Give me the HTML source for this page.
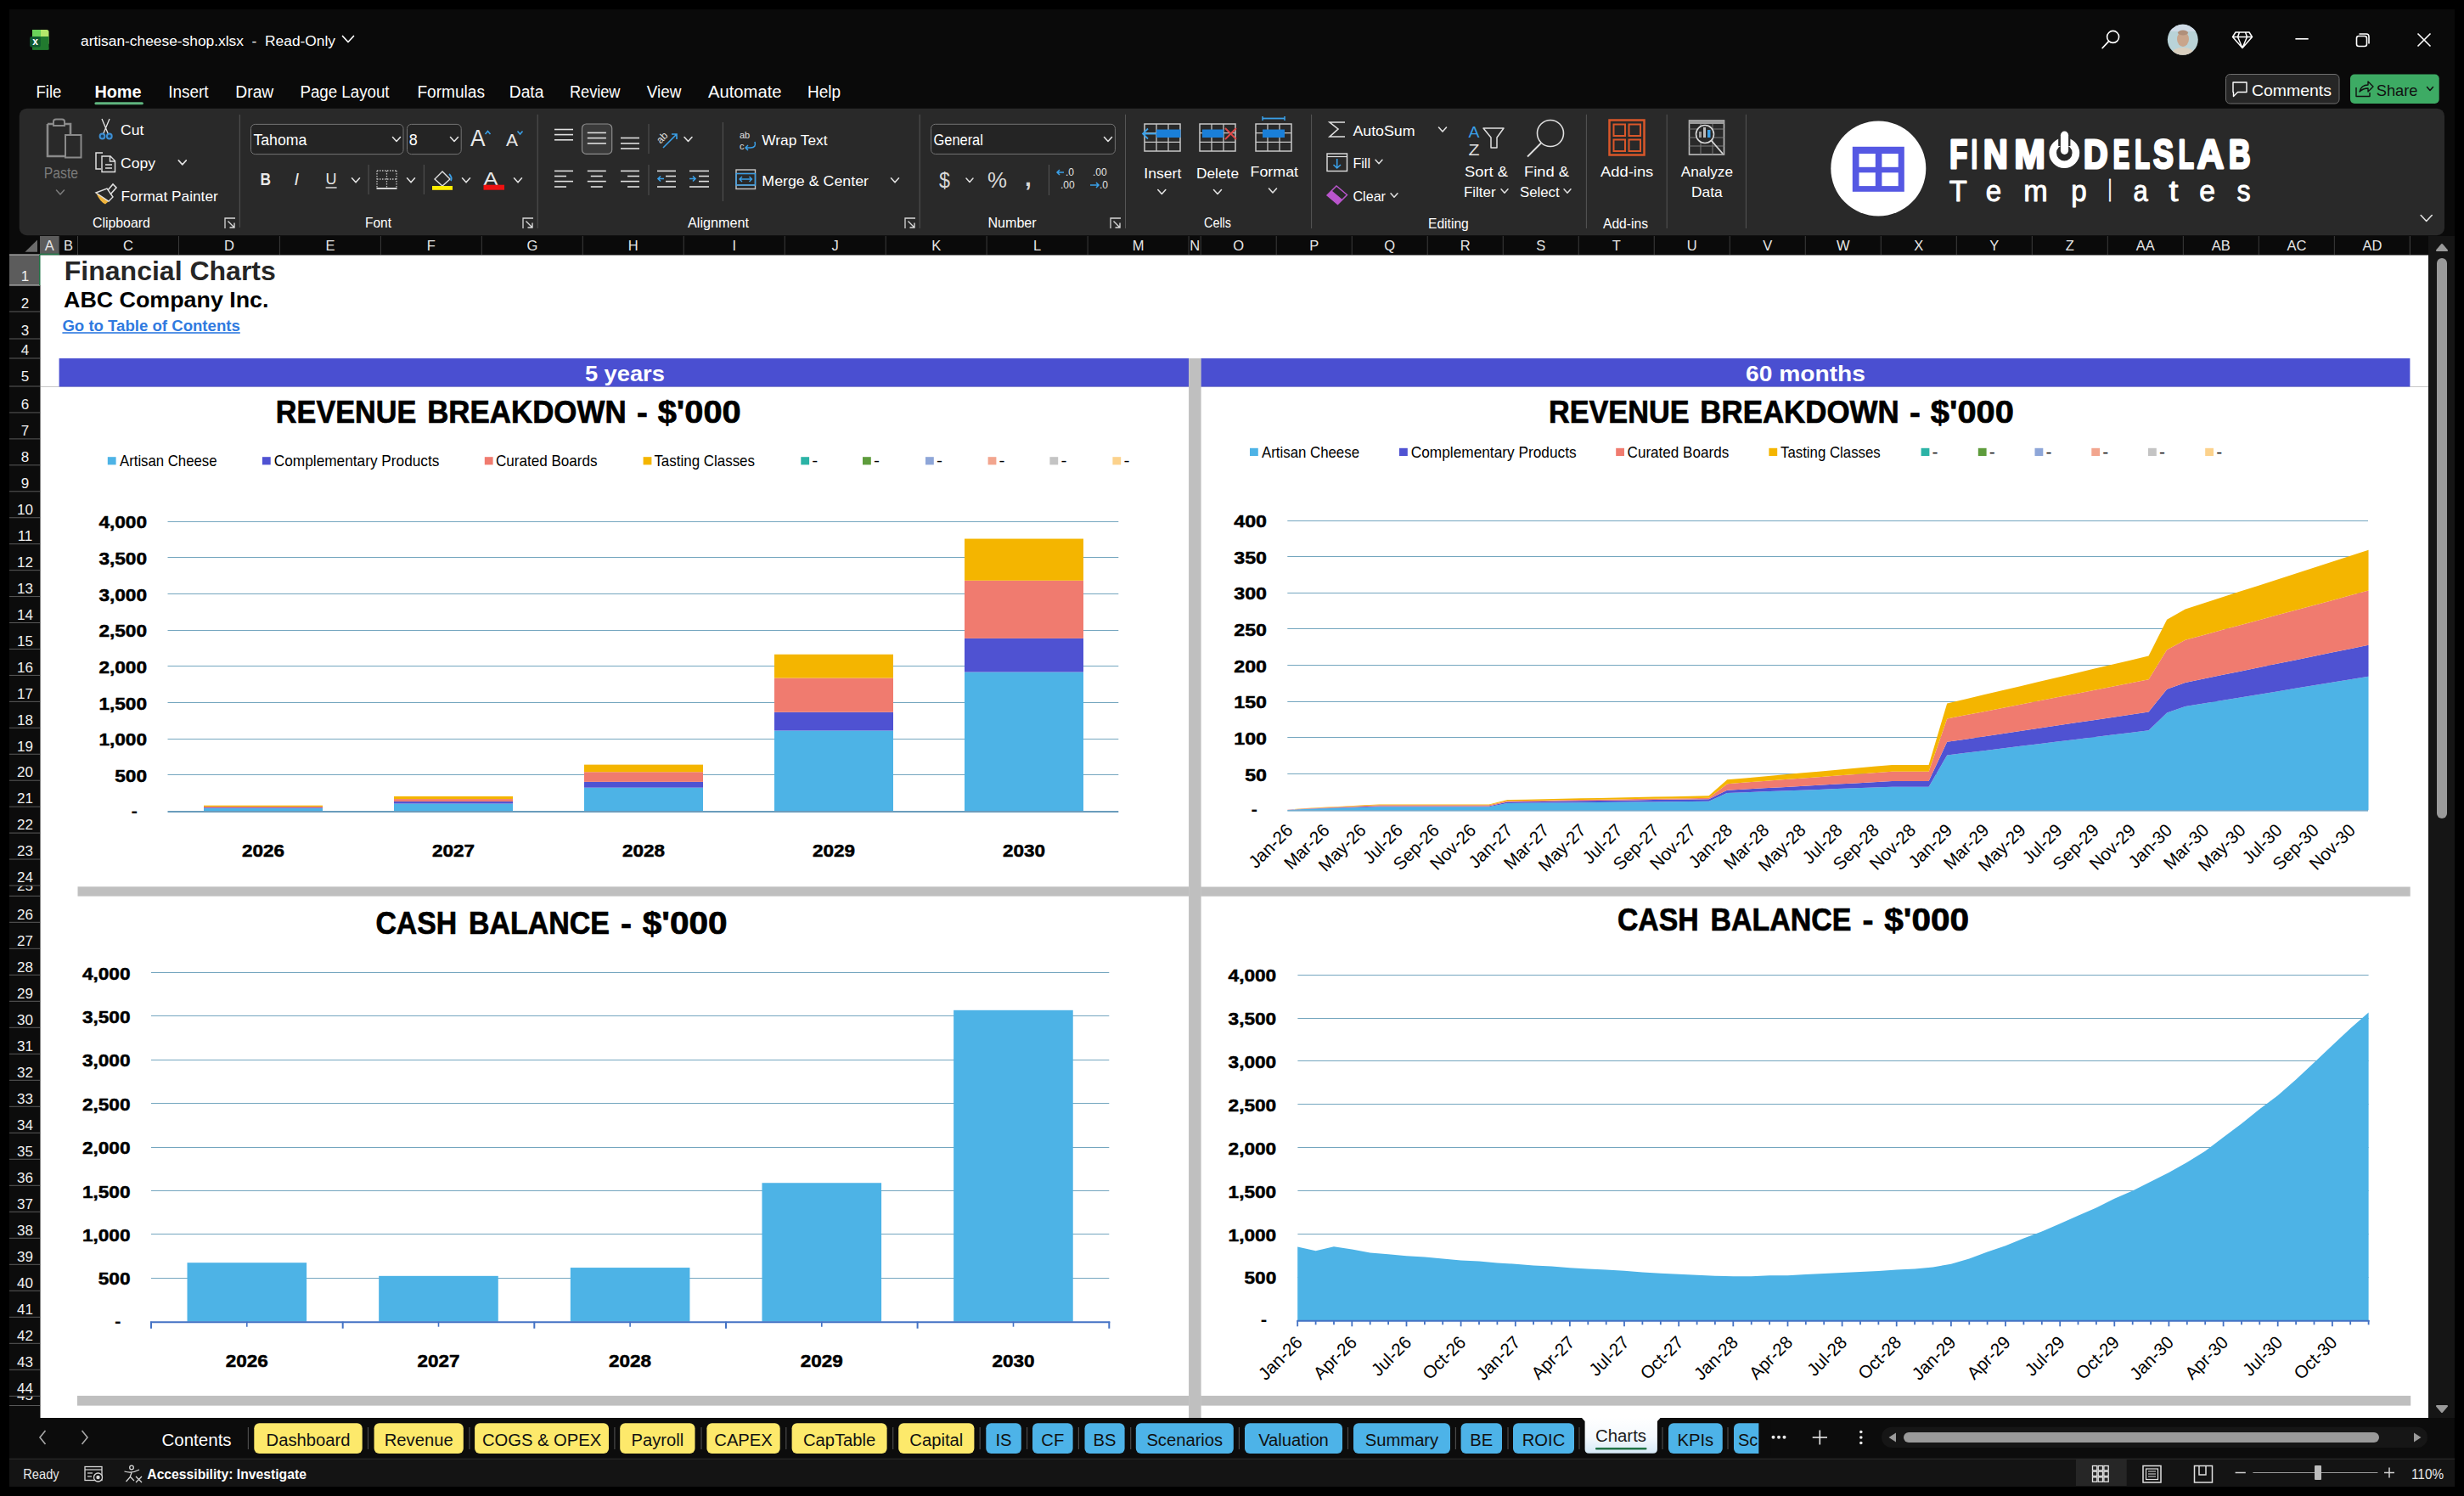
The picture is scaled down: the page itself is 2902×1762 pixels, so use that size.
<!DOCTYPE html>
<html><head><meta charset="utf-8"><title>artisan-cheese-shop.xlsx</title>
<style>html,body{margin:0;padding:0;background:#000;width:2902px;height:1762px;overflow:hidden}svg{display:block}text{font-family:"Liberation Sans",sans-serif}</style></head>
<body><svg width="2902" height="1762" viewBox="0 0 2902 1762" font-family="Liberation Sans, sans-serif">
<rect x="0" y="0" width="2902" height="1762" fill="#000" />
<rect x="11" y="11" width="2880" height="1739" fill="#0a0a0a" />
<rect x="38" y="35" width="19.5" height="18" fill="#b5e86b" rx="2.5" />
<rect x="38" y="35" width="10" height="8" fill="#6ad35a" />
<rect x="38" y="43" width="19.5" height="15.7" fill="#217a2e" />
<rect x="38" y="55" width="19.5" height="3.7" fill="#217a2e" rx="2" />
<rect x="35.2" y="43" width="12.6" height="12.5" fill="#0f5a30" rx="2" />
<text x="41.7" y="52.6" font-size="12" fill="#fff" font-weight="bold" text-anchor="middle" >x</text>
<text x="95" y="54" font-size="17.3" fill="#ffffff" textLength="300" lengthAdjust="spacingAndGlyphs" >artisan-cheese-shop.xlsx  -  Read-Only</text>
<path d="M403.5,42.5 L410,49.5 L416.5,42.5" fill="none" stroke="#fff" stroke-width="1.7" stroke-linecap="round" stroke-linejoin="round"/>
<circle cx="2488.6" cy="43.4" r="7" fill="none" stroke="#fff" stroke-width="1.6"/>
<line x1="2483.6" y1="48.6" x2="2476.2" y2="56.5" stroke="#fff" stroke-width="1.8" stroke-linecap="round"/>
<clipPath id="avc"><circle cx="2570.8" cy="46.8" r="18"/></clipPath>
<g clip-path="url(#avc)"><rect x="2552" y="28" width="38" height="38" fill="#b9d3d8"/><rect x="2552" y="28" width="38" height="9" fill="#cfdbe6"/><ellipse cx="2571" cy="46" rx="7" ry="9" fill="#c9a58c"/><ellipse cx="2571" cy="38.5" rx="6" ry="3" fill="#b08f7a"/><path d="M2556,66 Q2558,56 2571,56 Q2584,56 2586,66 Z" fill="#d9cfbf"/></g>
<path d="M2633,38 L2649,38 L2652.5,43.5 L2641,56.5 L2629.5,43.5 Z M2629.5,43.5 L2652.5,43.5 M2637.5,38 L2635.5,43.5 L2641,56.5 L2646.5,43.5 L2644.5,38" fill="none" stroke="#fff" stroke-width="1.5" stroke-linejoin="round"/>
<line x1="2703.4" y1="45.8" x2="2718.7" y2="45.8" stroke="#fff" stroke-width="1.6" />
<rect x="2775.5" y="42.5" width="12" height="12" fill="none" rx="2.5" stroke="#fff" stroke-width="1.6"/>
<path d="M2778.5,40 L2787,40 Q2790,40 2790,43 L2790,51.5" fill="none" stroke="#fff" stroke-width="1.6" />
<line x1="2847.5" y1="39.5" x2="2862.5" y2="54.5" stroke="#fff" stroke-width="1.6" />
<line x1="2862.5" y1="39.5" x2="2847.5" y2="54.5" stroke="#fff" stroke-width="1.6" />
<text x="42.5" y="114.5" font-size="20" fill="#fff" textLength="29.8" lengthAdjust="spacingAndGlyphs" >File</text>
<text x="111.4" y="114.5" font-size="20" fill="#fff" font-weight="bold" textLength="55.2" lengthAdjust="spacingAndGlyphs" >Home</text>
<text x="198.2" y="114.5" font-size="20" fill="#fff" textLength="47.3" lengthAdjust="spacingAndGlyphs" >Insert</text>
<text x="277.3" y="114.5" font-size="20" fill="#fff" textLength="45" lengthAdjust="spacingAndGlyphs" >Draw</text>
<text x="353.4" y="114.5" font-size="20" fill="#fff" textLength="105.2" lengthAdjust="spacingAndGlyphs" >Page Layout</text>
<text x="491.4" y="114.5" font-size="20" fill="#fff" textLength="79.6" lengthAdjust="spacingAndGlyphs" >Formulas</text>
<text x="599.8" y="114.5" font-size="20" fill="#fff" textLength="40.6" lengthAdjust="spacingAndGlyphs" >Data</text>
<text x="670.9" y="114.5" font-size="20" fill="#fff" textLength="59.6" lengthAdjust="spacingAndGlyphs" >Review</text>
<text x="761.8" y="114.5" font-size="20" fill="#fff" textLength="40.6" lengthAdjust="spacingAndGlyphs" >View</text>
<text x="834" y="114.5" font-size="20" fill="#fff" textLength="86.5" lengthAdjust="spacingAndGlyphs" >Automate</text>
<text x="951" y="114.5" font-size="20" fill="#fff" textLength="39" lengthAdjust="spacingAndGlyphs" >Help</text>
<rect x="111.4" y="120.2" width="57.5" height="3" fill="#5fb57f" rx="1.5" />
<rect x="2621.5" y="87.5" width="133.5" height="34.5" fill="#262626" rx="5" stroke="#6e6e6e" stroke-width="1"/>
<path d="M2630,97 L2646,97 L2646,108.5 L2635.5,108.5 L2630.5,113.5 L2630.5,108.5 L2630,108.5 Z" fill="none" stroke="#fff" stroke-width="1.4" stroke-linejoin="round"/>
<text x="2652" y="113" font-size="18.5" fill="#fff" textLength="94" lengthAdjust="spacingAndGlyphs" >Comments</text>
<rect x="2768" y="87.5" width="104.7" height="34.5" fill="#3dab64" rx="5" />
<path d="M2775,103 L2775,113.5 L2791,113.5 L2791,109 M2779,108 Q2781,100 2789,100 L2789,96 L2795,102 L2789,108 L2789,104 Q2783,104 2779,108 Z" fill="none" stroke="#111" stroke-width="1.4" stroke-linejoin="round"/>
<text x="2798.7" y="113" font-size="18.5" fill="#111" textLength="48.8" lengthAdjust="spacingAndGlyphs" >Share</text>
<path d="M2858.5,102.5 L2862,106.5 L2865.5,102.5" fill="none" stroke="#111" stroke-width="1.5" stroke-linecap="round" stroke-linejoin="round"/>
<rect x="22.7" y="127.7" width="2856.3" height="149.5" fill="#292929" rx="9" />
<path d="M56,146 L63,146 M76,146 L83,146 L83,158 M56,146 L56,184 L76,184" fill="none" stroke="#8a8a8a" stroke-width="2.6" />
<path d="M63,148 L63,143 Q63,140.5 66,140.5 L73,140.5 Q76,140.5 76,143 L76,148 Z" fill="#292929" stroke="#8a8a8a" stroke-width="2" />
<rect x="77" y="159" width="18.5" height="26.5" fill="#292929" stroke="#8a8a8a" stroke-width="2"/>
<text x="51.8" y="210" font-size="18" fill="#7a7a7a" textLength="40.2" lengthAdjust="spacingAndGlyphs" >Paste</text>
<path d="M66.5,224.0 L71,229.0 L75.5,224.0" fill="none" stroke="#7a7a7a" stroke-width="1.6" stroke-linecap="round" stroke-linejoin="round"/>
<path d="M120,140 L127.5,158 M129,140 L121.5,158" fill="none" stroke="#e8e8e8" stroke-width="1.3" />
<circle cx="120.5" cy="160.5" r="2.9" fill="#1d3f5c" stroke="#3d8fd4" stroke-width="2"/><circle cx="128.8" cy="160.5" r="2.9" fill="#1d3f5c" stroke="#3d8fd4" stroke-width="2"/>
<text x="142" y="159.3" font-size="17" fill="#ffffff" textLength="27.3" lengthAdjust="spacingAndGlyphs" >Cut</text>
<path d="M121,180 L113,180 L113,199 L119,199" fill="none" stroke="#e0e0e0" stroke-width="1.5" />
<path d="M120,184 L130,184 L135.5,189.5 L135.5,202.5 L120,202.5 Z M129.5,184 L129.5,190 L135.5,190 M124,194 L132,194 M124,198 L132,198" fill="none" stroke="#e0e0e0" stroke-width="1.4" />
<text x="142" y="197.5" font-size="17" fill="#ffffff" textLength="41" lengthAdjust="spacingAndGlyphs" >Copy</text>
<path d="M210.3,188.9 L214.8,193.9 L219.3,188.9" fill="none" stroke="#e0e0e0" stroke-width="1.6" stroke-linecap="round" stroke-linejoin="round"/>
<path d="M113,227 L128,237 L124,240.5 Q118,238 113,227 Z" fill="#f0b43c" />
<path d="M113,227 L126,222 L133,232 L128,237 Z" fill="none" stroke="#e0e0e0" stroke-width="1.4" />
<path d="M127,224 L133,217 L137,221 L130,229" fill="none" stroke="#e0e0e0" stroke-width="1.6" />
<text x="142.5" y="237.3" font-size="17" fill="#ffffff" textLength="114.3" lengthAdjust="spacingAndGlyphs" >Format Painter</text>
<text x="109" y="268" font-size="16.5" fill="#ffffff" textLength="67.8" lengthAdjust="spacingAndGlyphs" >Clipboard</text>
<path d="M265,269 L265,257 L277,257" fill="none" stroke="#d8d8d8" stroke-width="1.3" />
<path d="M268.5,260.5 L276,268 M276,262.5 L276,268 L270.5,268" fill="none" stroke="#d8d8d8" stroke-width="1.4" />
<line x1="282.3" y1="135" x2="282.3" y2="268" stroke="#555555" stroke-width="1" />
<rect x="295.5" y="146.4" width="179.5" height="35.2" fill="#242424" rx="5" stroke="#747474" stroke-width="1"/>
<text x="298.4" y="171" font-size="18" fill="#ffffff" textLength="63" lengthAdjust="spacingAndGlyphs" >Tahoma</text>
<path d="M462.5,161.5 L467,166.5 L471.5,161.5" fill="none" stroke="#e0e0e0" stroke-width="1.6" stroke-linecap="round" stroke-linejoin="round"/>
<rect x="479.5" y="146.4" width="63.7" height="35.2" fill="#242424" rx="5" stroke="#747474" stroke-width="1"/>
<text x="481.8" y="171" font-size="18" fill="#ffffff" >8</text>
<path d="M530.5,161.5 L535,166.5 L539.5,161.5" fill="none" stroke="#e0e0e0" stroke-width="1.6" stroke-linecap="round" stroke-linejoin="round"/>
<text x="554" y="172.3" font-size="27" fill="#e8e8e8" textLength="17.5" lengthAdjust="spacingAndGlyphs" >A</text>
<path d="M571.5,158 L574.5,154.5 L577.5,158" fill="none" stroke="#3aa0e8" stroke-width="1.6" />
<text x="596" y="172.3" font-size="21" fill="#e8e8e8" textLength="14" lengthAdjust="spacingAndGlyphs" >A</text>
<path d="M609.5,154.5 L612.5,158 L615.5,154.5" fill="none" stroke="#3aa0e8" stroke-width="1.6" />
<text x="306.5" y="217.5" font-size="20" fill="#e8e8e8" font-weight="bold" textLength="12.5" lengthAdjust="spacingAndGlyphs" >B</text>
<text x="346.5" y="217.5" font-size="20" fill="#e8e8e8" font-family="Liberation Serif" font-style="italic">I</text>
<text x="383.6" y="217" font-size="19" fill="#e8e8e8" textLength="13" lengthAdjust="spacingAndGlyphs" >U</text>
<line x1="383.6" y1="221" x2="396.6" y2="221" stroke="#e8e8e8" stroke-width="1.4" />
<path d="M414.5,209.8 L419,214.8 L423.5,209.8" fill="none" stroke="#e0e0e0" stroke-width="1.6" stroke-linecap="round" stroke-linejoin="round"/>
<line x1="434.1" y1="194" x2="434.1" y2="229" stroke="#555555" stroke-width="1" />
<path d="M444,201 L467,201 M444,201 L444,221 M467,201 L467,221 M455.5,201 L455.5,221 M444,211 L467,211" fill="none" stroke="#bdbdbd" stroke-width="1.3" stroke-dasharray="1.5 1.5"/>
<line x1="443.5" y1="222" x2="467.5" y2="222" stroke="#e8e8e8" stroke-width="1.8" />
<path d="M479.5,209.8 L484,214.8 L488.5,209.8" fill="none" stroke="#e0e0e0" stroke-width="1.6" stroke-linecap="round" stroke-linejoin="round"/>
<line x1="499.3" y1="194" x2="499.3" y2="229" stroke="#555555" stroke-width="1" />
<path d="M512,211 L521,202 L530,211 L521,219 Z" fill="none" stroke="#e0e0e0" stroke-width="1.4" />
<path d="M529,205 Q533,209 531,213" fill="none" stroke="#3aa0e8" stroke-width="1.8" />
<rect x="509" y="219" width="24" height="4.8" fill="#ffee00" />
<path d="M544.5,209.8 L549,214.8 L553.5,209.8" fill="none" stroke="#e0e0e0" stroke-width="1.6" stroke-linecap="round" stroke-linejoin="round"/>
<text x="569.5" y="217.5" font-size="22" fill="#e8e8e8" textLength="17" lengthAdjust="spacingAndGlyphs" >A</text>
<rect x="569.5" y="217.7" width="24.5" height="6" fill="#ee1111" />
<path d="M605.5,209.8 L610,214.8 L614.5,209.8" fill="none" stroke="#e0e0e0" stroke-width="1.6" stroke-linecap="round" stroke-linejoin="round"/>
<text x="430" y="268" font-size="16.5" fill="#ffffff" textLength="31" lengthAdjust="spacingAndGlyphs" >Font</text>
<path d="M616,269 L616,257 L628,257" fill="none" stroke="#d8d8d8" stroke-width="1.3" />
<path d="M619.5,260.5 L627,268 M627,262.5 L627,268 L621.5,268" fill="none" stroke="#d8d8d8" stroke-width="1.4" />
<line x1="633.2" y1="134.8" x2="633.2" y2="269" stroke="#555555" stroke-width="1" />
<line x1="653" y1="152.5" x2="675" y2="152.5" stroke="#e0e0e0" stroke-width="1.6" />
<line x1="653" y1="158.6" x2="675" y2="158.6" stroke="#e0e0e0" stroke-width="1.6" />
<line x1="653" y1="164.8" x2="675" y2="164.8" stroke="#e0e0e0" stroke-width="1.6" />
<rect x="685.5" y="146" width="35.2" height="35.4" fill="#3a3a3a" rx="5" stroke="#8c8c8c" stroke-width="1.2"/>
<line x1="691.8" y1="156.4" x2="713.9" y2="156.4" stroke="#e0e0e0" stroke-width="1.6" />
<line x1="691.8" y1="162.6" x2="713.9" y2="162.6" stroke="#e0e0e0" stroke-width="1.6" />
<line x1="691.8" y1="168.9" x2="713.9" y2="168.9" stroke="#e0e0e0" stroke-width="1.6" />
<line x1="731" y1="162.5" x2="753" y2="162.5" stroke="#e0e0e0" stroke-width="1.6" />
<line x1="731" y1="168.9" x2="753" y2="168.9" stroke="#e0e0e0" stroke-width="1.6" />
<line x1="731" y1="175" x2="753" y2="175" stroke="#e0e0e0" stroke-width="1.6" />
<line x1="764" y1="146" x2="764" y2="181" stroke="#555555" stroke-width="1" />
<text x="773" y="166" font-size="12" fill="#e0e0e0" transform="rotate(-45 780 162)">ab</text>
<path d="M781,174 L797,158 M791,158 L797,158 L797,164" fill="none" stroke="#3aa0e8" stroke-width="1.6" />
<path d="M806.0,161.5 L810.5,166.5 L815.0,161.5" fill="none" stroke="#e0e0e0" stroke-width="1.6" stroke-linecap="round" stroke-linejoin="round"/>
<line x1="851.4" y1="144" x2="851.4" y2="237" stroke="#555555" stroke-width="1" />
<text x="871" y="163" font-size="11" fill="#e0e0e0" >ab</text>
<text x="871" y="176" font-size="11" fill="#e0e0e0" >c</text>
<path d="M889,167 Q891,174 884,174 L878,174 M881,171 L878,174 L881,177" fill="none" stroke="#3aa0e8" stroke-width="1.5" />
<text x="897.3" y="171" font-size="17" fill="#ffffff" textLength="77.2" lengthAdjust="spacingAndGlyphs" >Wrap Text</text>
<line x1="653" y1="201.4" x2="675" y2="201.4" stroke="#e0e0e0" stroke-width="1.6" />
<line x1="691.8" y1="201.4" x2="713.8" y2="201.4" stroke="#e0e0e0" stroke-width="1.6" />
<line x1="731" y1="201.4" x2="753" y2="201.4" stroke="#e0e0e0" stroke-width="1.6" />
<line x1="653" y1="207.5" x2="667" y2="207.5" stroke="#e0e0e0" stroke-width="1.6" />
<line x1="695.8" y1="207.5" x2="709.8" y2="207.5" stroke="#e0e0e0" stroke-width="1.6" />
<line x1="739" y1="207.5" x2="753" y2="207.5" stroke="#e0e0e0" stroke-width="1.6" />
<line x1="653" y1="213.6" x2="675" y2="213.6" stroke="#e0e0e0" stroke-width="1.6" />
<line x1="691.8" y1="213.6" x2="713.8" y2="213.6" stroke="#e0e0e0" stroke-width="1.6" />
<line x1="731" y1="213.6" x2="753" y2="213.6" stroke="#e0e0e0" stroke-width="1.6" />
<line x1="653" y1="220" x2="667" y2="220" stroke="#e0e0e0" stroke-width="1.6" />
<line x1="695.8" y1="220" x2="709.8" y2="220" stroke="#e0e0e0" stroke-width="1.6" />
<line x1="739" y1="220" x2="753" y2="220" stroke="#e0e0e0" stroke-width="1.6" />
<line x1="764" y1="194" x2="764" y2="230" stroke="#555555" stroke-width="1" />
<line x1="774" y1="201.4" x2="796" y2="201.4" stroke="#e0e0e0" stroke-width="1.6" />
<line x1="812" y1="201.4" x2="835" y2="201.4" stroke="#e0e0e0" stroke-width="1.6" />
<line x1="784" y1="207.5" x2="796" y2="207.5" stroke="#e0e0e0" stroke-width="1.6" />
<line x1="823" y1="207.5" x2="835" y2="207.5" stroke="#e0e0e0" stroke-width="1.6" />
<line x1="784" y1="213.6" x2="796" y2="213.6" stroke="#e0e0e0" stroke-width="1.6" />
<line x1="823" y1="213.6" x2="835" y2="213.6" stroke="#e0e0e0" stroke-width="1.6" />
<line x1="774" y1="220" x2="796" y2="220" stroke="#e0e0e0" stroke-width="1.6" />
<line x1="812" y1="220" x2="835" y2="220" stroke="#e0e0e0" stroke-width="1.6" />
<path d="M782,210.5 L775,210.5 M778,207.5 L775,210.5 L778,213.5" fill="none" stroke="#3aa0e8" stroke-width="1.6" />
<path d="M812,210.5 L819,210.5 M816,207.5 L819,210.5 L816,213.5" fill="none" stroke="#3aa0e8" stroke-width="1.6" />
<rect x="867" y="200" width="22.5" height="22.5" fill="none" stroke="#c8c8c8" stroke-width="1.4"/>
<line x1="867" y1="204.5" x2="889.5" y2="204.5" stroke="#c8c8c8" stroke-width="1.2" />
<line x1="867" y1="218" x2="889.5" y2="218" stroke="#c8c8c8" stroke-width="1.2" />
<rect x="867" y="204.5" width="22.5" height="13.5" fill="none" stroke="#3aa0e8" stroke-width="1.4"/>
<path d="M871,211 L885.5,211 M874,208 L871,211 L874,214 M882.5,208 L885.5,211 L882.5,214" fill="none" stroke="#3aa0e8" stroke-width="1.4" />
<text x="897.3" y="219.3" font-size="17" fill="#ffffff" textLength="125.7" lengthAdjust="spacingAndGlyphs" >Merge &amp; Center</text>
<path d="M1049.5,209.8 L1054,214.8 L1058.5,209.8" fill="none" stroke="#e0e0e0" stroke-width="1.6" stroke-linecap="round" stroke-linejoin="round"/>
<text x="810" y="267.7" font-size="16.5" fill="#ffffff" textLength="72" lengthAdjust="spacingAndGlyphs" >Alignment</text>
<path d="M1066,269 L1066,257 L1078,257" fill="none" stroke="#d8d8d8" stroke-width="1.3" />
<path d="M1069.5,260.5 L1077,268 M1077,262.5 L1077,268 L1071.5,268" fill="none" stroke="#d8d8d8" stroke-width="1.4" />
<line x1="1083.2" y1="134.8" x2="1083.2" y2="269" stroke="#555555" stroke-width="1" />
<rect x="1096.6" y="146.3" width="216.8" height="35.1" fill="#242424" rx="5" stroke="#747474" stroke-width="1"/>
<text x="1099.5" y="171" font-size="18" fill="#ffffff" textLength="58.4" lengthAdjust="spacingAndGlyphs" >General</text>
<path d="M1300.5,161.5 L1305,166.5 L1309.5,161.5" fill="none" stroke="#e0e0e0" stroke-width="1.6" stroke-linecap="round" stroke-linejoin="round"/>
<text x="1106" y="221" font-size="25" fill="#d8d8d8" textLength="13" lengthAdjust="spacingAndGlyphs" >$</text>
<path d="M1138.0,210.05 L1142,214.55 L1146.0,210.05" fill="none" stroke="#e0e0e0" stroke-width="1.5" stroke-linecap="round" stroke-linejoin="round"/>
<text x="1163" y="221" font-size="25" fill="#d8d8d8" textLength="23" lengthAdjust="spacingAndGlyphs" >%</text>
<text x="1207" y="219" font-size="28" fill="#d8d8d8" font-weight="bold" >,</text>
<line x1="1235.5" y1="194" x2="1235.5" y2="230" stroke="#555555" stroke-width="1" />
<text x="1255" y="207" font-size="12" fill="#e0e0e0" >.0</text>
<text x="1249" y="222" font-size="12" fill="#e0e0e0" >.00</text>
<path d="M1253,203 L1245,203 M1248,200 L1245,203 L1248,206" fill="none" stroke="#3aa0e8" stroke-width="1.5" />
<text x="1287" y="207" font-size="12" fill="#e0e0e0" >.00</text>
<text x="1295" y="222" font-size="12" fill="#e0e0e0" >.0</text>
<path d="M1284,218 L1294,218 M1291,215 L1294,218 L1291,221" fill="none" stroke="#3aa0e8" stroke-width="1.5" />
<text x="1163.4" y="268" font-size="16.5" fill="#ffffff" textLength="57.3" lengthAdjust="spacingAndGlyphs" >Number</text>
<path d="M1308,269 L1308,257 L1320,257" fill="none" stroke="#d8d8d8" stroke-width="1.3" />
<path d="M1311.5,260.5 L1319,268 M1319,262.5 L1319,268 L1313.5,268" fill="none" stroke="#d8d8d8" stroke-width="1.4" />
<line x1="1325.5" y1="134.8" x2="1325.5" y2="269" stroke="#555555" stroke-width="1" />
<rect x="1348" y="146" width="42" height="32" fill="none" stroke="#c8c8c8" stroke-width="1.5"/>
<line x1="1362.0" y1="146" x2="1362.0" y2="178" stroke="#c8c8c8" stroke-width="1.3" />
<line x1="1348" y1="156.66666666666666" x2="1390" y2="156.66666666666666" stroke="#c8c8c8" stroke-width="1.3" />
<line x1="1376.0" y1="146" x2="1376.0" y2="178" stroke="#c8c8c8" stroke-width="1.3" />
<line x1="1348" y1="167.33333333333334" x2="1390" y2="167.33333333333334" stroke="#c8c8c8" stroke-width="1.3" />
<rect x="1362" y="152.5" width="28.5" height="9.5" fill="#1a7fd8" />
<path d="M1346,157.5 L1362,157.5 M1352,151.5 L1346,157.5 L1352,163.5" fill="none" stroke="#3aa0e8" stroke-width="1.8" />
<text x="1347.3" y="210" font-size="17" fill="#ffffff" textLength="44" lengthAdjust="spacingAndGlyphs" >Insert</text>
<path d="M1363.8,223.5 L1368.3,228.5 L1372.8,223.5" fill="none" stroke="#e0e0e0" stroke-width="1.6" stroke-linecap="round" stroke-linejoin="round"/>
<rect x="1413" y="146" width="42" height="32" fill="none" stroke="#c8c8c8" stroke-width="1.5"/>
<line x1="1427.0" y1="146" x2="1427.0" y2="178" stroke="#c8c8c8" stroke-width="1.3" />
<line x1="1413" y1="156.66666666666666" x2="1455" y2="156.66666666666666" stroke="#c8c8c8" stroke-width="1.3" />
<line x1="1441.0" y1="146" x2="1441.0" y2="178" stroke="#c8c8c8" stroke-width="1.3" />
<line x1="1413" y1="167.33333333333334" x2="1455" y2="167.33333333333334" stroke="#c8c8c8" stroke-width="1.3" />
<rect x="1416" y="152.5" width="25" height="9.5" fill="#1a7fd8" />
<path d="M1443,151 L1456,164 M1456,151 L1443,164" fill="none" stroke="#e04848" stroke-width="1.8" />
<text x="1409" y="210" font-size="17" fill="#ffffff" textLength="50" lengthAdjust="spacingAndGlyphs" >Delete</text>
<path d="M1429.5,223.5 L1434,228.5 L1438.5,223.5" fill="none" stroke="#e0e0e0" stroke-width="1.6" stroke-linecap="round" stroke-linejoin="round"/>
<rect x="1479" y="146" width="42" height="32" fill="none" stroke="#c8c8c8" stroke-width="1.5"/>
<line x1="1493.0" y1="146" x2="1493.0" y2="178" stroke="#c8c8c8" stroke-width="1.3" />
<line x1="1479" y1="156.66666666666666" x2="1521" y2="156.66666666666666" stroke="#c8c8c8" stroke-width="1.3" />
<line x1="1507.0" y1="146" x2="1507.0" y2="178" stroke="#c8c8c8" stroke-width="1.3" />
<line x1="1479" y1="167.33333333333334" x2="1521" y2="167.33333333333334" stroke="#c8c8c8" stroke-width="1.3" />
<rect x="1487" y="152.5" width="26" height="9.5" fill="#1a7fd8" />
<line x1="1487" y1="139.5" x2="1513" y2="139.5" stroke="#3aa0e8" stroke-width="1.8" />
<line x1="1487" y1="137" x2="1487" y2="142" stroke="#3aa0e8" stroke-width="1.5" />
<line x1="1513" y1="137" x2="1513" y2="142" stroke="#3aa0e8" stroke-width="1.5" />
<text x="1472.6" y="207.7" font-size="17" fill="#ffffff" textLength="56.4" lengthAdjust="spacingAndGlyphs" >Format</text>
<path d="M1494.5,222.0 L1499,227.0 L1503.5,222.0" fill="none" stroke="#e0e0e0" stroke-width="1.6" stroke-linecap="round" stroke-linejoin="round"/>
<text x="1418" y="268" font-size="16.5" fill="#ffffff" textLength="32" lengthAdjust="spacingAndGlyphs" >Cells</text>
<line x1="1544.6" y1="134.8" x2="1544.6" y2="269" stroke="#555555" stroke-width="1" />
<path d="M1584,144 L1566,144 L1576,152 L1566,161 L1584,161" fill="none" stroke="#e0e0e0" stroke-width="1.6" />
<text x="1593.4" y="159.8" font-size="17" fill="#ffffff" textLength="73.2" lengthAdjust="spacingAndGlyphs" >AutoSum</text>
<path d="M1694.5,150.0 L1699,155.0 L1703.5,150.0" fill="none" stroke="#e0e0e0" stroke-width="1.6" stroke-linecap="round" stroke-linejoin="round"/>
<rect x="1563" y="181" width="23.5" height="20.5" fill="none" stroke="#e0e0e0" stroke-width="1.4"/>
<line x1="1563" y1="184.5" x2="1586.5" y2="184.5" stroke="#e0e0e0" stroke-width="1.2" />
<path d="M1574.7,187 L1574.7,198 M1570.5,194 L1574.7,198 L1579,194" fill="none" stroke="#3aa0e8" stroke-width="1.6" />
<text x="1593.4" y="197.7" font-size="17" fill="#ffffff" textLength="20.6" lengthAdjust="spacingAndGlyphs" >Fill</text>
<path d="M1620.0,188.25 L1624,192.75 L1628.0,188.25" fill="none" stroke="#e0e0e0" stroke-width="1.5" stroke-linecap="round" stroke-linejoin="round"/>
<path d="M1563,230 L1574,219 L1586.5,229.5 L1575.5,240.5 Z" fill="none" stroke="#b955cc" stroke-width="1.5" />
<path d="M1563,230 L1568.5,224.5 L1581,235 L1575.5,240.5 Z" fill="#b955cc" />
<text x="1593.4" y="237" font-size="17" fill="#ffffff" textLength="38.6" lengthAdjust="spacingAndGlyphs" >Clear</text>
<path d="M1638.0,227.75 L1642,232.25 L1646.0,227.75" fill="none" stroke="#e0e0e0" stroke-width="1.5" stroke-linecap="round" stroke-linejoin="round"/>
<text x="1729.5" y="162" font-size="19" fill="#3aa0e8" textLength="13" lengthAdjust="spacingAndGlyphs" >A</text>
<text x="1729.5" y="182.5" font-size="19" fill="#e0e0e0" textLength="13" lengthAdjust="spacingAndGlyphs" >Z</text>
<path d="M1747,151 L1771,151 L1763,162 L1763,174 L1756,174 L1756,162 Z" fill="none" stroke="#e0e0e0" stroke-width="1.5" stroke-linejoin="round"/>
<text x="1725" y="207.5" font-size="17" fill="#ffffff" textLength="51" lengthAdjust="spacingAndGlyphs" >Sort &amp;</text>
<text x="1724" y="231.8" font-size="17" fill="#ffffff" textLength="37.6" lengthAdjust="spacingAndGlyphs" >Filter</text>
<path d="M1768.0,222.75 L1772,227.25 L1776.0,222.75" fill="none" stroke="#e0e0e0" stroke-width="1.5" stroke-linecap="round" stroke-linejoin="round"/>
<circle cx="1826" cy="157" r="15.5" fill="none" stroke="#e0e0e0" stroke-width="1.6"/>
<line x1="1815" y1="168.5" x2="1799" y2="184.5" stroke="#e0e0e0" stroke-width="1.8" />
<text x="1795" y="207.5" font-size="17" fill="#ffffff" textLength="53" lengthAdjust="spacingAndGlyphs" >Find &amp;</text>
<text x="1790" y="231.8" font-size="17" fill="#ffffff" textLength="46.6" lengthAdjust="spacingAndGlyphs" >Select</text>
<path d="M1842.0,222.75 L1846,227.25 L1850.0,222.75" fill="none" stroke="#e0e0e0" stroke-width="1.5" stroke-linecap="round" stroke-linejoin="round"/>
<text x="1682" y="268.9" font-size="16.5" fill="#ffffff" textLength="47.8" lengthAdjust="spacingAndGlyphs" >Editing</text>
<line x1="1868.4" y1="134.8" x2="1868.4" y2="269" stroke="#555555" stroke-width="1" />
<rect x="1895.5" y="141.5" width="41" height="41" fill="none" stroke="#d9572a" stroke-width="2.5"/>
<rect x="1900.5" y="146.5" width="13.5" height="13.5" fill="none" stroke="#d9572a" stroke-width="2"/>
<rect x="1900.5" y="164.5" width="13.5" height="13.5" fill="none" stroke="#d9572a" stroke-width="2"/>
<rect x="1918.5" y="146.5" width="13.5" height="13.5" fill="none" stroke="#d9572a" stroke-width="2"/>
<rect x="1918.5" y="164.5" width="13.5" height="13.5" fill="none" stroke="#d9572a" stroke-width="2"/>
<text x="1885" y="207.5" font-size="17" fill="#ffffff" textLength="62.3" lengthAdjust="spacingAndGlyphs" >Add-ins</text>
<text x="1888" y="268.9" font-size="16.5" fill="#ffffff" textLength="53" lengthAdjust="spacingAndGlyphs" >Add-ins</text>
<line x1="1963.2" y1="134.8" x2="1963.2" y2="269" stroke="#555555" stroke-width="1" />
<rect x="1989.5" y="142" width="41" height="40" fill="none" stroke="#bdbdbd" stroke-width="1.6"/>
<rect x="1989.5" y="142" width="41" height="4" fill="#9a9a9a" />
<line x1="1989.5" y1="152" x2="2030.5" y2="152" stroke="#7a7a7a" stroke-width="1" />
<line x1="1989.5" y1="162" x2="2030.5" y2="162" stroke="#7a7a7a" stroke-width="1" />
<line x1="1989.5" y1="172" x2="2030.5" y2="172" stroke="#7a7a7a" stroke-width="1" />
<line x1="2003" y1="146" x2="2003" y2="182" stroke="#7a7a7a" stroke-width="1" />
<line x1="2017" y1="146" x2="2017" y2="182" stroke="#7a7a7a" stroke-width="1" />
<circle cx="2008" cy="158" r="10.5" fill="#292929" stroke="#d8d8d8" stroke-width="1.6"/>
<line x1="2015.5" y1="165.5" x2="2029" y2="181" stroke="#d8d8d8" stroke-width="1.8" />
<rect x="2001" y="155" width="3" height="7" fill="#9a9a9a" />
<rect x="2006" y="150" width="3" height="12" fill="#bdbdbd" />
<rect x="2011" y="153" width="3.5" height="9" fill="#3aa0e8" />
<text x="1979.8" y="207.5" font-size="17" fill="#ffffff" textLength="61.2" lengthAdjust="spacingAndGlyphs" >Analyze</text>
<text x="1992" y="231.8" font-size="17" fill="#ffffff" textLength="36.6" lengthAdjust="spacingAndGlyphs" >Data</text>
<line x1="2056.4" y1="134.8" x2="2056.4" y2="269" stroke="#555555" stroke-width="1" />
<circle cx="2212.3" cy="198.5" r="56" fill="#ffffff"/>
<rect x="2181.8" y="172.8" width="61" height="53" fill="#5558e3" />
<rect x="2189.5" y="181" width="19.3" height="15.8" fill="#ffffff" />
<rect x="2189.5" y="203.3" width="19.3" height="15.8" fill="#ffffff" />
<rect x="2216.4" y="181" width="19.3" height="15.8" fill="#ffffff" />
<rect x="2216.4" y="203.3" width="19.3" height="15.8" fill="#ffffff" />
<text x="0" y="0" font-size="48" fill="#fff" font-weight="bold" transform="translate(2296.14,197.8) scale(0.714,1)" stroke="#fff" stroke-width="3.2" stroke-linejoin="round">F</text>
<text x="0" y="0" font-size="48" fill="#fff" font-weight="bold" transform="translate(2321.75,197.8) scale(0.533,1)" stroke="#fff" stroke-width="3.2" stroke-linejoin="round">I</text>
<text x="0" y="0" font-size="48" fill="#fff" font-weight="bold" transform="translate(2336.02,197.8) scale(0.826,1)" stroke="#fff" stroke-width="3.2" stroke-linejoin="round">N</text>
<text x="0" y="0" font-size="48" fill="#fff" font-weight="bold" transform="translate(2372.44,197.8) scale(0.903,1)" stroke="#fff" stroke-width="3.2" stroke-linejoin="round">M</text>
<text x="0" y="0" font-size="48" fill="#fff" font-weight="bold" transform="translate(2454.02,197.8) scale(0.823,1)" stroke="#fff" stroke-width="3.2" stroke-linejoin="round">D</text>
<text x="0" y="0" font-size="48" fill="#fff" font-weight="bold" transform="translate(2488.66,197.8) scale(0.602,1)" stroke="#fff" stroke-width="3.2" stroke-linejoin="round">E</text>
<text x="0" y="0" font-size="48" fill="#fff" font-weight="bold" transform="translate(2514.16,197.8) scale(0.603,1)" stroke="#fff" stroke-width="3.2" stroke-linejoin="round">L</text>
<text x="0" y="0" font-size="48" fill="#fff" font-weight="bold" transform="translate(2535.99,197.8) scale(0.744,1)" stroke="#fff" stroke-width="3.2" stroke-linejoin="round">S</text>
<text x="0" y="0" font-size="48" fill="#fff" font-weight="bold" transform="translate(2565.79,197.8) scale(0.618,1)" stroke="#fff" stroke-width="3.2" stroke-linejoin="round">L</text>
<text x="0" y="0" font-size="48" fill="#fff" font-weight="bold" transform="translate(2587.85,197.8) scale(0.905,1)" stroke="#fff" stroke-width="3.2" stroke-linejoin="round">A</text>
<text x="0" y="0" font-size="48" fill="#fff" font-weight="bold" transform="translate(2624.97,197.8) scale(0.734,1)" stroke="#fff" stroke-width="3.2" stroke-linejoin="round">B</text>
<circle cx="2431.3" cy="180.1" r="13.6" fill="none" stroke="#fff" stroke-width="8.6"/>
<rect x="2424.2" y="158" width="14.2" height="14" fill="#292929" />
<rect x="2426.9" y="154.6" width="9.2" height="27.3" fill="#fff" rx="4.6" />
<text x="0" y="0" font-size="34.5" fill="#fff" transform="translate(2295.85,237.1) scale(1.000,1)" stroke="#fff" stroke-width="0.9" stroke-linejoin="round">T</text>
<text x="0" y="0" font-size="34.5" fill="#fff" transform="translate(2338.63,237.1) scale(0.960,1)" stroke="#fff" stroke-width="0.9" stroke-linejoin="round">e</text>
<text x="0" y="0" font-size="34.5" fill="#fff" transform="translate(2383.35,237.1) scale(0.990,1)" stroke="#fff" stroke-width="0.9" stroke-linejoin="round">m</text>
<text x="0" y="0" font-size="34.5" fill="#fff" transform="translate(2439.23,237.1) scale(0.960,1)" stroke="#fff" stroke-width="0.9" stroke-linejoin="round">p</text>
<text x="0" y="0" font-size="34.5" fill="#fff" transform="translate(2483.30,237.1) scale(0.453,1)" stroke="#fff" stroke-width="0.9" stroke-linejoin="round">l</text>
<text x="0" y="0" font-size="34.5" fill="#fff" transform="translate(2512.41,237.1) scale(0.900,1)" stroke="#fff" stroke-width="0.9" stroke-linejoin="round">a</text>
<text x="0" y="0" font-size="34.5" fill="#fff" transform="translate(2554.51,237.1) scale(1.143,1)" stroke="#fff" stroke-width="0.9" stroke-linejoin="round">t</text>
<text x="0" y="0" font-size="34.5" fill="#fff" transform="translate(2590.34,237.1) scale(0.980,1)" stroke="#fff" stroke-width="0.9" stroke-linejoin="round">e</text>
<text x="0" y="0" font-size="34.5" fill="#fff" transform="translate(2634.62,237.1) scale(0.934,1)" stroke="#fff" stroke-width="0.9" stroke-linejoin="round">s</text>
<path d="M2851.2,253.5 L2857.7,260.5 L2864.2,253.5" fill="none" stroke="#e0e0e0" stroke-width="1.6" stroke-linecap="round" stroke-linejoin="round"/>
<rect x="47" y="278" width="2813" height="22" fill="#0a0a0a" />
<rect x="47" y="278" width="22.6" height="22" fill="#5c5c5c" />
<text x="58.3" y="295.4" font-size="16.5" fill="#e6e6e6" text-anchor="middle" >A</text>
<line x1="69.6" y1="278" x2="69.6" y2="300" stroke="#3c3c3c" stroke-width="1" />
<text x="80.55" y="295.4" font-size="16.5" fill="#e6e6e6" text-anchor="middle" >B</text>
<line x1="91.5" y1="278" x2="91.5" y2="300" stroke="#3c3c3c" stroke-width="1" />
<text x="150.98" y="295.4" font-size="16.5" fill="#e6e6e6" text-anchor="middle" >C</text>
<line x1="210.45999999999998" y1="278" x2="210.45999999999998" y2="300" stroke="#3c3c3c" stroke-width="1" />
<text x="269.93999999999994" y="295.4" font-size="16.5" fill="#e6e6e6" text-anchor="middle" >D</text>
<line x1="329.41999999999996" y1="278" x2="329.41999999999996" y2="300" stroke="#3c3c3c" stroke-width="1" />
<text x="388.9" y="295.4" font-size="16.5" fill="#e6e6e6" text-anchor="middle" >E</text>
<line x1="448.38" y1="278" x2="448.38" y2="300" stroke="#3c3c3c" stroke-width="1" />
<text x="507.85999999999996" y="295.4" font-size="16.5" fill="#e6e6e6" text-anchor="middle" >F</text>
<line x1="567.3399999999999" y1="278" x2="567.3399999999999" y2="300" stroke="#3c3c3c" stroke-width="1" />
<text x="626.8199999999999" y="295.4" font-size="16.5" fill="#e6e6e6" text-anchor="middle" >G</text>
<line x1="686.3" y1="278" x2="686.3" y2="300" stroke="#3c3c3c" stroke-width="1" />
<text x="745.78" y="295.4" font-size="16.5" fill="#e6e6e6" text-anchor="middle" >H</text>
<line x1="805.26" y1="278" x2="805.26" y2="300" stroke="#3c3c3c" stroke-width="1" />
<text x="864.74" y="295.4" font-size="16.5" fill="#e6e6e6" text-anchor="middle" >I</text>
<line x1="924.2199999999999" y1="278" x2="924.2199999999999" y2="300" stroke="#3c3c3c" stroke-width="1" />
<text x="983.6999999999998" y="295.4" font-size="16.5" fill="#e6e6e6" text-anchor="middle" >J</text>
<line x1="1043.1799999999998" y1="278" x2="1043.1799999999998" y2="300" stroke="#3c3c3c" stroke-width="1" />
<text x="1102.6599999999999" y="295.4" font-size="16.5" fill="#e6e6e6" text-anchor="middle" >K</text>
<line x1="1162.1399999999999" y1="278" x2="1162.1399999999999" y2="300" stroke="#3c3c3c" stroke-width="1" />
<text x="1221.62" y="295.4" font-size="16.5" fill="#e6e6e6" text-anchor="middle" >L</text>
<line x1="1281.1" y1="278" x2="1281.1" y2="300" stroke="#3c3c3c" stroke-width="1" />
<text x="1340.58" y="295.4" font-size="16.5" fill="#e6e6e6" text-anchor="middle" >M</text>
<line x1="1400.06" y1="278" x2="1400.06" y2="300" stroke="#3c3c3c" stroke-width="1" />
<text x="1407.13" y="295.4" font-size="16.5" fill="#e6e6e6" text-anchor="middle" >N</text>
<line x1="1414.2" y1="278" x2="1414.2" y2="300" stroke="#3c3c3c" stroke-width="1" />
<text x="1458.705" y="295.4" font-size="16.5" fill="#e6e6e6" text-anchor="middle" >O</text>
<line x1="1503.21" y1="278" x2="1503.21" y2="300" stroke="#3c3c3c" stroke-width="1" />
<text x="1547.7150000000001" y="295.4" font-size="16.5" fill="#e6e6e6" text-anchor="middle" >P</text>
<line x1="1592.22" y1="278" x2="1592.22" y2="300" stroke="#3c3c3c" stroke-width="1" />
<text x="1636.725" y="295.4" font-size="16.5" fill="#e6e6e6" text-anchor="middle" >Q</text>
<line x1="1681.23" y1="278" x2="1681.23" y2="300" stroke="#3c3c3c" stroke-width="1" />
<text x="1725.7350000000001" y="295.4" font-size="16.5" fill="#e6e6e6" text-anchor="middle" >R</text>
<line x1="1770.24" y1="278" x2="1770.24" y2="300" stroke="#3c3c3c" stroke-width="1" />
<text x="1814.745" y="295.4" font-size="16.5" fill="#e6e6e6" text-anchor="middle" >S</text>
<line x1="1859.25" y1="278" x2="1859.25" y2="300" stroke="#3c3c3c" stroke-width="1" />
<text x="1903.755" y="295.4" font-size="16.5" fill="#e6e6e6" text-anchor="middle" >T</text>
<line x1="1948.2600000000002" y1="278" x2="1948.2600000000002" y2="300" stroke="#3c3c3c" stroke-width="1" />
<text x="1992.765" y="295.4" font-size="16.5" fill="#e6e6e6" text-anchor="middle" >U</text>
<line x1="2037.27" y1="278" x2="2037.27" y2="300" stroke="#3c3c3c" stroke-width="1" />
<text x="2081.775" y="295.4" font-size="16.5" fill="#e6e6e6" text-anchor="middle" >V</text>
<line x1="2126.28" y1="278" x2="2126.28" y2="300" stroke="#3c3c3c" stroke-width="1" />
<text x="2170.785" y="295.4" font-size="16.5" fill="#e6e6e6" text-anchor="middle" >W</text>
<line x1="2215.29" y1="278" x2="2215.29" y2="300" stroke="#3c3c3c" stroke-width="1" />
<text x="2259.795" y="295.4" font-size="16.5" fill="#e6e6e6" text-anchor="middle" >X</text>
<line x1="2304.3" y1="278" x2="2304.3" y2="300" stroke="#3c3c3c" stroke-width="1" />
<text x="2348.8050000000003" y="295.4" font-size="16.5" fill="#e6e6e6" text-anchor="middle" >Y</text>
<line x1="2393.31" y1="278" x2="2393.31" y2="300" stroke="#3c3c3c" stroke-width="1" />
<text x="2437.815" y="295.4" font-size="16.5" fill="#e6e6e6" text-anchor="middle" >Z</text>
<line x1="2482.32" y1="278" x2="2482.32" y2="300" stroke="#3c3c3c" stroke-width="1" />
<text x="2526.825" y="295.4" font-size="16.5" fill="#e6e6e6" text-anchor="middle" >AA</text>
<line x1="2571.33" y1="278" x2="2571.33" y2="300" stroke="#3c3c3c" stroke-width="1" />
<text x="2615.835" y="295.4" font-size="16.5" fill="#e6e6e6" text-anchor="middle" >AB</text>
<line x1="2660.34" y1="278" x2="2660.34" y2="300" stroke="#3c3c3c" stroke-width="1" />
<text x="2704.8450000000003" y="295.4" font-size="16.5" fill="#e6e6e6" text-anchor="middle" >AC</text>
<line x1="2749.3500000000004" y1="278" x2="2749.3500000000004" y2="300" stroke="#3c3c3c" stroke-width="1" />
<text x="2793.8550000000005" y="295.4" font-size="16.5" fill="#e6e6e6" text-anchor="middle" >AD</text>
<line x1="2838.36" y1="278" x2="2838.36" y2="300" stroke="#3c3c3c" stroke-width="1" />
<line x1="2838.4" y1="278" x2="2838.4" y2="300" stroke="#3c3c3c" stroke-width="1" />
<rect x="47" y="298.6" width="22.6" height="2" fill="#217346" />
<path d="M44,282.6 L44,296.7 L29.4,296.7 Z" fill="#6b6b6b" />
<rect x="11" y="300" width="36" height="1370" fill="#0c0c0c" />
<rect x="11" y="300" width="35.5" height="36" fill="#5c5c5c" />
<defs>
<clipPath id="rc0"><rect x="11" y="300.5" width="36" height="35.5"/></clipPath>
<clipPath id="rc1"><rect x="11" y="336.5" width="36" height="30.5"/></clipPath>
<clipPath id="rc2"><rect x="11" y="367.5" width="36" height="31.5"/></clipPath>
<clipPath id="rc3"><rect x="11" y="399.5" width="36" height="22.5"/></clipPath>
<clipPath id="rc4"><rect x="11" y="422.5" width="36" height="32.5"/></clipPath>
<clipPath id="rc5"><rect x="11" y="455.5" width="36" height="30.447000000000003"/></clipPath>
<clipPath id="rc6"><rect x="11" y="486.447" width="36" height="30.447000000000003"/></clipPath>
<clipPath id="rc7"><rect x="11" y="517.394" width="36" height="30.447000000000003"/></clipPath>
<clipPath id="rc8"><rect x="11" y="548.341" width="36" height="30.447000000000003"/></clipPath>
<clipPath id="rc9"><rect x="11" y="579.288" width="36" height="30.447000000000003"/></clipPath>
<clipPath id="rc10"><rect x="11" y="610.235" width="36" height="30.447000000000003"/></clipPath>
<clipPath id="rc11"><rect x="11" y="641.182" width="36" height="30.447000000000003"/></clipPath>
<clipPath id="rc12"><rect x="11" y="672.129" width="36" height="30.447000000000003"/></clipPath>
<clipPath id="rc13"><rect x="11" y="703.076" width="36" height="30.44699999999989"/></clipPath>
<clipPath id="rc14"><rect x="11" y="734.0229999999999" width="36" height="30.447000000000116"/></clipPath>
<clipPath id="rc15"><rect x="11" y="764.97" width="36" height="30.44699999999989"/></clipPath>
<clipPath id="rc16"><rect x="11" y="795.9169999999999" width="36" height="30.447000000000116"/></clipPath>
<clipPath id="rc17"><rect x="11" y="826.864" width="36" height="30.44699999999989"/></clipPath>
<clipPath id="rc18"><rect x="11" y="857.8109999999999" width="36" height="30.447000000000116"/></clipPath>
<clipPath id="rc19"><rect x="11" y="888.758" width="36" height="30.44699999999989"/></clipPath>
<clipPath id="rc20"><rect x="11" y="919.7049999999999" width="36" height="30.447000000000116"/></clipPath>
<clipPath id="rc21"><rect x="11" y="950.652" width="36" height="30.44699999999989"/></clipPath>
<clipPath id="rc22"><rect x="11" y="981.5989999999999" width="36" height="30.447000000000003"/></clipPath>
<clipPath id="rc23"><rect x="11" y="1012.5459999999999" width="36" height="30.447000000000003"/></clipPath>
<clipPath id="rc24"><rect x="11" y="1043.493" width="36" height="11.807000000000016"/></clipPath>
<clipPath id="rc25"><rect x="11" y="1055.8" width="36" height="30.5"/></clipPath>
<clipPath id="rc26"><rect x="11" y="1086.8" width="36" height="30.5"/></clipPath>
<clipPath id="rc27"><rect x="11" y="1117.8" width="36" height="30.5"/></clipPath>
<clipPath id="rc28"><rect x="11" y="1148.8" width="36" height="30.5"/></clipPath>
<clipPath id="rc29"><rect x="11" y="1179.8" width="36" height="30.5"/></clipPath>
<clipPath id="rc30"><rect x="11" y="1210.8" width="36" height="30.5"/></clipPath>
<clipPath id="rc31"><rect x="11" y="1241.8" width="36" height="30.5"/></clipPath>
<clipPath id="rc32"><rect x="11" y="1272.8" width="36" height="30.5"/></clipPath>
<clipPath id="rc33"><rect x="11" y="1303.8" width="36" height="30.5"/></clipPath>
<clipPath id="rc34"><rect x="11" y="1334.8" width="36" height="30.5"/></clipPath>
<clipPath id="rc35"><rect x="11" y="1365.8" width="36" height="30.5"/></clipPath>
<clipPath id="rc36"><rect x="11" y="1396.8" width="36" height="30.5"/></clipPath>
<clipPath id="rc37"><rect x="11" y="1427.8" width="36" height="30.5"/></clipPath>
<clipPath id="rc38"><rect x="11" y="1458.8" width="36" height="30.5"/></clipPath>
<clipPath id="rc39"><rect x="11" y="1489.8" width="36" height="30.5"/></clipPath>
<clipPath id="rc40"><rect x="11" y="1520.8" width="36" height="30.5"/></clipPath>
<clipPath id="rc41"><rect x="11" y="1551.8" width="36" height="30.5"/></clipPath>
<clipPath id="rc42"><rect x="11" y="1582.8" width="36" height="30.5"/></clipPath>
<clipPath id="rc43"><rect x="11" y="1613.8" width="36" height="30.5"/></clipPath>
<clipPath id="rc44"><rect x="11" y="1644.8" width="36" height="10.700000000000045"/></clipPath>
<clipPath id="rc45"><rect x="11" y="1656.0" width="36" height="30.5"/></clipPath>
</defs>
<line x1="11" y1="336.0" x2="47" y2="336.0" stroke="#d0d0d0" stroke-width="1" />
<text x="29.5" y="331.4" font-size="17" fill="#f0f0f0" text-anchor="middle" clip-path="url(#rc0)">1</text>
<line x1="11" y1="367.0" x2="47" y2="367.0" stroke="#5a5a5a" stroke-width="1" />
<text x="29.5" y="363.2" font-size="17" fill="#f0f0f0" text-anchor="middle" clip-path="url(#rc1)">2</text>
<line x1="11" y1="399.0" x2="47" y2="399.0" stroke="#5a5a5a" stroke-width="1" />
<text x="29.5" y="395.2" font-size="17" fill="#f0f0f0" text-anchor="middle" clip-path="url(#rc2)">3</text>
<line x1="11" y1="422.0" x2="47" y2="422.0" stroke="#5a5a5a" stroke-width="1" />
<text x="29.5" y="418.2" font-size="17" fill="#f0f0f0" text-anchor="middle" clip-path="url(#rc3)">4</text>
<line x1="11" y1="455.0" x2="47" y2="455.0" stroke="#5a5a5a" stroke-width="1" />
<text x="29.5" y="448.5" font-size="17" fill="#f0f0f0" text-anchor="middle" clip-path="url(#rc4)">5</text>
<line x1="11" y1="485.947" x2="47" y2="485.947" stroke="#5a5a5a" stroke-width="1" />
<text x="29.5" y="482.1" font-size="17" fill="#f0f0f0" text-anchor="middle" clip-path="url(#rc5)">6</text>
<line x1="11" y1="516.894" x2="47" y2="516.894" stroke="#5a5a5a" stroke-width="1" />
<text x="29.5" y="513.1" font-size="17" fill="#f0f0f0" text-anchor="middle" clip-path="url(#rc6)">7</text>
<line x1="11" y1="547.841" x2="47" y2="547.841" stroke="#5a5a5a" stroke-width="1" />
<text x="29.5" y="544.0" font-size="17" fill="#f0f0f0" text-anchor="middle" clip-path="url(#rc7)">8</text>
<line x1="11" y1="578.788" x2="47" y2="578.788" stroke="#5a5a5a" stroke-width="1" />
<text x="29.5" y="575.0" font-size="17" fill="#f0f0f0" text-anchor="middle" clip-path="url(#rc8)">9</text>
<line x1="11" y1="609.735" x2="47" y2="609.735" stroke="#5a5a5a" stroke-width="1" />
<text x="29.5" y="605.9" font-size="17" fill="#f0f0f0" text-anchor="middle" clip-path="url(#rc9)">10</text>
<line x1="11" y1="640.682" x2="47" y2="640.682" stroke="#5a5a5a" stroke-width="1" />
<text x="29.5" y="636.9" font-size="17" fill="#f0f0f0" text-anchor="middle" clip-path="url(#rc10)">11</text>
<line x1="11" y1="671.629" x2="47" y2="671.629" stroke="#5a5a5a" stroke-width="1" />
<text x="29.5" y="667.8" font-size="17" fill="#f0f0f0" text-anchor="middle" clip-path="url(#rc11)">12</text>
<line x1="11" y1="702.576" x2="47" y2="702.576" stroke="#5a5a5a" stroke-width="1" />
<text x="29.5" y="698.8" font-size="17" fill="#f0f0f0" text-anchor="middle" clip-path="url(#rc12)">13</text>
<line x1="11" y1="733.5229999999999" x2="47" y2="733.5229999999999" stroke="#5a5a5a" stroke-width="1" />
<text x="29.5" y="729.7" font-size="17" fill="#f0f0f0" text-anchor="middle" clip-path="url(#rc13)">14</text>
<line x1="11" y1="764.47" x2="47" y2="764.47" stroke="#5a5a5a" stroke-width="1" />
<text x="29.5" y="760.7" font-size="17" fill="#f0f0f0" text-anchor="middle" clip-path="url(#rc14)">15</text>
<line x1="11" y1="795.4169999999999" x2="47" y2="795.4169999999999" stroke="#5a5a5a" stroke-width="1" />
<text x="29.5" y="791.6" font-size="17" fill="#f0f0f0" text-anchor="middle" clip-path="url(#rc15)">16</text>
<line x1="11" y1="826.364" x2="47" y2="826.364" stroke="#5a5a5a" stroke-width="1" />
<text x="29.5" y="822.6" font-size="17" fill="#f0f0f0" text-anchor="middle" clip-path="url(#rc16)">17</text>
<line x1="11" y1="857.3109999999999" x2="47" y2="857.3109999999999" stroke="#5a5a5a" stroke-width="1" />
<text x="29.5" y="853.5" font-size="17" fill="#f0f0f0" text-anchor="middle" clip-path="url(#rc17)">18</text>
<line x1="11" y1="888.258" x2="47" y2="888.258" stroke="#5a5a5a" stroke-width="1" />
<text x="29.5" y="884.5" font-size="17" fill="#f0f0f0" text-anchor="middle" clip-path="url(#rc18)">19</text>
<line x1="11" y1="919.2049999999999" x2="47" y2="919.2049999999999" stroke="#5a5a5a" stroke-width="1" />
<text x="29.5" y="915.4" font-size="17" fill="#f0f0f0" text-anchor="middle" clip-path="url(#rc19)">20</text>
<line x1="11" y1="950.152" x2="47" y2="950.152" stroke="#5a5a5a" stroke-width="1" />
<text x="29.5" y="946.4" font-size="17" fill="#f0f0f0" text-anchor="middle" clip-path="url(#rc20)">21</text>
<line x1="11" y1="981.0989999999999" x2="47" y2="981.0989999999999" stroke="#5a5a5a" stroke-width="1" />
<text x="29.5" y="977.3" font-size="17" fill="#f0f0f0" text-anchor="middle" clip-path="url(#rc21)">22</text>
<line x1="11" y1="1012.0459999999999" x2="47" y2="1012.0459999999999" stroke="#5a5a5a" stroke-width="1" />
<text x="29.5" y="1008.2" font-size="17" fill="#f0f0f0" text-anchor="middle" clip-path="url(#rc22)">23</text>
<line x1="11" y1="1042.993" x2="47" y2="1042.993" stroke="#5a5a5a" stroke-width="1" />
<text x="29.5" y="1039.2" font-size="17" fill="#f0f0f0" text-anchor="middle" clip-path="url(#rc23)">24</text>
<line x1="11" y1="1055.3" x2="47" y2="1055.3" stroke="#5a5a5a" stroke-width="1" />
<text x="29.5" y="1048.8" font-size="17" fill="#f0f0f0" text-anchor="middle" clip-path="url(#rc24)">25</text>
<line x1="11" y1="1086.3" x2="47" y2="1086.3" stroke="#5a5a5a" stroke-width="1" />
<text x="29.5" y="1082.5" font-size="17" fill="#f0f0f0" text-anchor="middle" clip-path="url(#rc25)">26</text>
<line x1="11" y1="1117.3" x2="47" y2="1117.3" stroke="#5a5a5a" stroke-width="1" />
<text x="29.5" y="1113.5" font-size="17" fill="#f0f0f0" text-anchor="middle" clip-path="url(#rc26)">27</text>
<line x1="11" y1="1148.3" x2="47" y2="1148.3" stroke="#5a5a5a" stroke-width="1" />
<text x="29.5" y="1144.5" font-size="17" fill="#f0f0f0" text-anchor="middle" clip-path="url(#rc27)">28</text>
<line x1="11" y1="1179.3" x2="47" y2="1179.3" stroke="#5a5a5a" stroke-width="1" />
<text x="29.5" y="1175.5" font-size="17" fill="#f0f0f0" text-anchor="middle" clip-path="url(#rc28)">29</text>
<line x1="11" y1="1210.3" x2="47" y2="1210.3" stroke="#5a5a5a" stroke-width="1" />
<text x="29.5" y="1206.5" font-size="17" fill="#f0f0f0" text-anchor="middle" clip-path="url(#rc29)">30</text>
<line x1="11" y1="1241.3" x2="47" y2="1241.3" stroke="#5a5a5a" stroke-width="1" />
<text x="29.5" y="1237.5" font-size="17" fill="#f0f0f0" text-anchor="middle" clip-path="url(#rc30)">31</text>
<line x1="11" y1="1272.3" x2="47" y2="1272.3" stroke="#5a5a5a" stroke-width="1" />
<text x="29.5" y="1268.5" font-size="17" fill="#f0f0f0" text-anchor="middle" clip-path="url(#rc31)">32</text>
<line x1="11" y1="1303.3" x2="47" y2="1303.3" stroke="#5a5a5a" stroke-width="1" />
<text x="29.5" y="1299.5" font-size="17" fill="#f0f0f0" text-anchor="middle" clip-path="url(#rc32)">33</text>
<line x1="11" y1="1334.3" x2="47" y2="1334.3" stroke="#5a5a5a" stroke-width="1" />
<text x="29.5" y="1330.5" font-size="17" fill="#f0f0f0" text-anchor="middle" clip-path="url(#rc33)">34</text>
<line x1="11" y1="1365.3" x2="47" y2="1365.3" stroke="#5a5a5a" stroke-width="1" />
<text x="29.5" y="1361.5" font-size="17" fill="#f0f0f0" text-anchor="middle" clip-path="url(#rc34)">35</text>
<line x1="11" y1="1396.3" x2="47" y2="1396.3" stroke="#5a5a5a" stroke-width="1" />
<text x="29.5" y="1392.5" font-size="17" fill="#f0f0f0" text-anchor="middle" clip-path="url(#rc35)">36</text>
<line x1="11" y1="1427.3" x2="47" y2="1427.3" stroke="#5a5a5a" stroke-width="1" />
<text x="29.5" y="1423.5" font-size="17" fill="#f0f0f0" text-anchor="middle" clip-path="url(#rc36)">37</text>
<line x1="11" y1="1458.3" x2="47" y2="1458.3" stroke="#5a5a5a" stroke-width="1" />
<text x="29.5" y="1454.5" font-size="17" fill="#f0f0f0" text-anchor="middle" clip-path="url(#rc37)">38</text>
<line x1="11" y1="1489.3" x2="47" y2="1489.3" stroke="#5a5a5a" stroke-width="1" />
<text x="29.5" y="1485.5" font-size="17" fill="#f0f0f0" text-anchor="middle" clip-path="url(#rc38)">39</text>
<line x1="11" y1="1520.3" x2="47" y2="1520.3" stroke="#5a5a5a" stroke-width="1" />
<text x="29.5" y="1516.5" font-size="17" fill="#f0f0f0" text-anchor="middle" clip-path="url(#rc39)">40</text>
<line x1="11" y1="1551.3" x2="47" y2="1551.3" stroke="#5a5a5a" stroke-width="1" />
<text x="29.5" y="1547.5" font-size="17" fill="#f0f0f0" text-anchor="middle" clip-path="url(#rc40)">41</text>
<line x1="11" y1="1582.3" x2="47" y2="1582.3" stroke="#5a5a5a" stroke-width="1" />
<text x="29.5" y="1578.5" font-size="17" fill="#f0f0f0" text-anchor="middle" clip-path="url(#rc41)">42</text>
<line x1="11" y1="1613.3" x2="47" y2="1613.3" stroke="#5a5a5a" stroke-width="1" />
<text x="29.5" y="1609.5" font-size="17" fill="#f0f0f0" text-anchor="middle" clip-path="url(#rc42)">43</text>
<line x1="11" y1="1644.3" x2="47" y2="1644.3" stroke="#5a5a5a" stroke-width="1" />
<text x="29.5" y="1640.5" font-size="17" fill="#f0f0f0" text-anchor="middle" clip-path="url(#rc43)">44</text>
<line x1="11" y1="1655.5" x2="47" y2="1655.5" stroke="#5a5a5a" stroke-width="1" />
<text x="29.5" y="1649.0" font-size="17" fill="#f0f0f0" text-anchor="middle" clip-path="url(#rc44)">45</text>
<line x1="11" y1="1686.5" x2="47" y2="1686.5" stroke="#5a5a5a" stroke-width="1" />
<line x1="11" y1="300" x2="47" y2="300" stroke="#d0d0d0" stroke-width="1" />
<rect x="46" y="300" width="2" height="36" fill="#217346" />
<rect x="2860" y="278" width="31" height="1392" fill="#151515" />
<path d="M2870,295 L2876,288 L2882,295 Z" fill="#9a9a9a" stroke="#9a9a9a" stroke-width="2" stroke-linejoin="round"/>
<rect x="2870" y="304" width="12" height="660" fill="#9a9a9a" rx="6" />
<path d="M2870,1656 L2876,1663 L2882,1656 Z" fill="#9a9a9a" stroke="#9a9a9a" stroke-width="2" stroke-linejoin="round"/>
<rect x="47.5" y="300.5" width="2812.5" height="1369.5" fill="#ffffff" />
<text x="75.8" y="330" font-size="32" fill="#262626" font-weight="bold" textLength="249" lengthAdjust="spacingAndGlyphs" >Financial Charts</text>
<text x="75" y="362" font-size="25" fill="#000000" font-weight="bold" textLength="241.5" lengthAdjust="spacingAndGlyphs" >ABC Company Inc.</text>
<text x="73.4" y="390" font-size="18" fill="#2f7ae0" font-weight="bold" textLength="209.4" lengthAdjust="spacingAndGlyphs" >Go to Table of Contents</text>
<rect x="73.4" y="391.2" width="209.4" height="1.6" fill="#2f7ae0" />
<line x1="48" y1="455.5" x2="2860" y2="455.5" stroke="#c8c8c8" stroke-width="1" />
<rect x="69.6" y="422.1" width="1330.5" height="33.4" fill="#4a4fd1" />
<rect x="1414.2" y="422.1" width="1424.2" height="33.4" fill="#4a4fd1" />
<rect x="1400.1" y="422.1" width="14.5" height="1248" fill="#bfbfbf" />
<text x="735.9" y="448.8" font-size="26" fill="#fff" font-weight="bold" text-anchor="middle" textLength="94" lengthAdjust="spacingAndGlyphs" >5 years</text>
<text x="2126.5" y="448.8" font-size="26" fill="#fff" font-weight="bold" text-anchor="middle" textLength="141" lengthAdjust="spacingAndGlyphs" >60 months</text>
<rect x="91.5" y="1044.3" width="1308.6" height="11.3" fill="#bfbfbf" />
<rect x="1414.2" y="1044.5" width="1424.5" height="11.2" fill="#bfbfbf" />
<rect x="91" y="1643.9" width="1309.1" height="11.7" fill="#bfbfbf" />
<rect x="1414.2" y="1643.9" width="1425" height="11.7" fill="#bfbfbf" />
<text x="324.8" y="498" font-size="36" fill="#000" font-weight="bold" textLength="165.6" lengthAdjust="spacingAndGlyphs" stroke="#000" stroke-width="0.7">REVENUE</text>
<text x="503.2" y="498" font-size="36" fill="#000" font-weight="bold" textLength="234.4" lengthAdjust="spacingAndGlyphs" stroke="#000" stroke-width="0.7">BREAKDOWN</text>
<text x="749.9" y="498" font-size="36" fill="#000" font-weight="bold" textLength="12.8" lengthAdjust="spacingAndGlyphs" stroke="#000" stroke-width="0.7">-</text>
<text x="774.7" y="498" font-size="36" fill="#000" font-weight="bold" textLength="98.0" lengthAdjust="spacingAndGlyphs" stroke="#000" stroke-width="0.7">$'000</text>
<rect x="126.8" y="538.2" width="9.8" height="9.2" fill="#4db3e6" />
<text x="141" y="549.4" font-size="17.8" fill="#000" textLength="114.5" lengthAdjust="spacingAndGlyphs" >Artisan Cheese</text>
<rect x="308.9" y="538.2" width="9.8" height="9.2" fill="#4f52d2" />
<text x="322.8" y="549.4" font-size="17.8" fill="#000" textLength="194.6" lengthAdjust="spacingAndGlyphs" >Complementary Products</text>
<rect x="570.8" y="538.2" width="9.8" height="9.2" fill="#f07b6f" />
<text x="584" y="549.4" font-size="17.8" fill="#000" textLength="119.5" lengthAdjust="spacingAndGlyphs" >Curated Boards</text>
<rect x="757.6" y="538.2" width="9.8" height="9.2" fill="#f4b500" />
<text x="770.4" y="549.4" font-size="17.8" fill="#000" textLength="118.6" lengthAdjust="spacingAndGlyphs" >Tasting Classes</text>
<rect x="943.3" y="538.2" width="9.8" height="9.2" fill="#2bb3a6" />
<text x="956.3" y="549.4" font-size="17.8" fill="#000" textLength="7" lengthAdjust="spacingAndGlyphs" >-</text>
<rect x="1016" y="538.2" width="9.8" height="9.2" fill="#5e9c3c" />
<text x="1029" y="549.4" font-size="17.8" fill="#000" textLength="7" lengthAdjust="spacingAndGlyphs" >-</text>
<rect x="1090" y="538.2" width="9.8" height="9.2" fill="#8ea6d8" />
<text x="1103" y="549.4" font-size="17.8" fill="#000" textLength="7" lengthAdjust="spacingAndGlyphs" >-</text>
<rect x="1163.6" y="538.2" width="9.8" height="9.2" fill="#f2a58e" />
<text x="1176.6" y="549.4" font-size="17.8" fill="#000" textLength="7" lengthAdjust="spacingAndGlyphs" >-</text>
<rect x="1236.4" y="538.2" width="9.8" height="9.2" fill="#c4c4c4" />
<text x="1249.4" y="549.4" font-size="17.8" fill="#000" textLength="7" lengthAdjust="spacingAndGlyphs" >-</text>
<rect x="1310.4" y="538.2" width="9.8" height="9.2" fill="#fcd28c" />
<text x="1323.4" y="549.4" font-size="17.8" fill="#000" textLength="7" lengthAdjust="spacingAndGlyphs" >-</text>
<line x1="197.5" y1="912.5" x2="1317.3" y2="912.5" stroke="#74a6bf" stroke-width="1" />
<line x1="197.5" y1="870.5" x2="1317.3" y2="870.5" stroke="#74a6bf" stroke-width="1" />
<line x1="197.5" y1="827.5" x2="1317.3" y2="827.5" stroke="#74a6bf" stroke-width="1" />
<line x1="197.5" y1="784.5" x2="1317.3" y2="784.5" stroke="#74a6bf" stroke-width="1" />
<line x1="197.5" y1="742.5" x2="1317.3" y2="742.5" stroke="#74a6bf" stroke-width="1" />
<line x1="197.5" y1="699.5" x2="1317.3" y2="699.5" stroke="#74a6bf" stroke-width="1" />
<line x1="197.5" y1="656.5" x2="1317.3" y2="656.5" stroke="#74a6bf" stroke-width="1" />
<line x1="197.5" y1="614.5" x2="1317.3" y2="614.5" stroke="#74a6bf" stroke-width="1" />
<text x="162" y="961.5" font-size="20" fill="#000" font-weight="bold" text-anchor="end" textLength="7.5" lengthAdjust="spacingAndGlyphs" >-</text>
<text x="173" y="920.8" font-size="20" fill="#000" font-weight="bold" text-anchor="end" textLength="37.7" lengthAdjust="spacingAndGlyphs" stroke="#000" stroke-width="0.5">500</text>
<text x="173" y="878.2" font-size="20" fill="#000" font-weight="bold" text-anchor="end" textLength="56.6" lengthAdjust="spacingAndGlyphs" stroke="#000" stroke-width="0.5">1,000</text>
<text x="173" y="835.5" font-size="20" fill="#000" font-weight="bold" text-anchor="end" textLength="56.6" lengthAdjust="spacingAndGlyphs" stroke="#000" stroke-width="0.5">1,500</text>
<text x="173" y="792.8" font-size="20" fill="#000" font-weight="bold" text-anchor="end" textLength="56.6" lengthAdjust="spacingAndGlyphs" stroke="#000" stroke-width="0.5">2,000</text>
<text x="173" y="750.1" font-size="20" fill="#000" font-weight="bold" text-anchor="end" textLength="56.6" lengthAdjust="spacingAndGlyphs" stroke="#000" stroke-width="0.5">2,500</text>
<text x="173" y="707.5" font-size="20" fill="#000" font-weight="bold" text-anchor="end" textLength="56.6" lengthAdjust="spacingAndGlyphs" stroke="#000" stroke-width="0.5">3,000</text>
<text x="173" y="664.8" font-size="20" fill="#000" font-weight="bold" text-anchor="end" textLength="56.6" lengthAdjust="spacingAndGlyphs" stroke="#000" stroke-width="0.5">3,500</text>
<text x="173" y="622.1" font-size="20" fill="#000" font-weight="bold" text-anchor="end" textLength="56.6" lengthAdjust="spacingAndGlyphs" stroke="#000" stroke-width="0.5">4,000</text>
<rect x="240" y="952.09" width="140" height="3.41" fill="#4db3e6" />
<rect x="240" y="951.23" width="140" height="0.85" fill="#4f52d2" />
<rect x="240" y="949.95" width="140" height="1.28" fill="#f07b6f" />
<rect x="240" y="948.67" width="140" height="1.28" fill="#f4b500" />
<text x="310" y="1009" font-size="20.5" fill="#000" font-weight="bold" text-anchor="middle" textLength="50" lengthAdjust="spacingAndGlyphs" stroke="#000" stroke-width="0.5">2026</text>
<rect x="464" y="946.54" width="140" height="8.96" fill="#4db3e6" />
<rect x="464" y="944.06" width="140" height="2.47" fill="#4f52d2" />
<rect x="464" y="941.08" width="140" height="2.99" fill="#f07b6f" />
<rect x="464" y="937.92" width="140" height="3.16" fill="#f4b500" />
<text x="534" y="1009" font-size="20.5" fill="#000" font-weight="bold" text-anchor="middle" textLength="50" lengthAdjust="spacingAndGlyphs" stroke="#000" stroke-width="0.5">2027</text>
<rect x="688" y="927.68" width="140" height="27.82" fill="#4db3e6" />
<rect x="688" y="920.85" width="140" height="6.83" fill="#4f52d2" />
<rect x="688" y="909.25" width="140" height="11.61" fill="#f07b6f" />
<rect x="688" y="900.63" width="140" height="8.62" fill="#f4b500" />
<text x="758" y="1009" font-size="20.5" fill="#000" font-weight="bold" text-anchor="middle" textLength="50" lengthAdjust="spacingAndGlyphs" stroke="#000" stroke-width="0.5">2028</text>
<rect x="912" y="860.52" width="140" height="94.98" fill="#4db3e6" />
<rect x="912" y="838.75" width="140" height="21.76" fill="#4f52d2" />
<rect x="912" y="798.56" width="140" height="40.2" fill="#f07b6f" />
<rect x="912" y="770.74" width="140" height="27.82" fill="#f4b500" />
<text x="982" y="1009" font-size="20.5" fill="#000" font-weight="bold" text-anchor="middle" textLength="50" lengthAdjust="spacingAndGlyphs" stroke="#000" stroke-width="0.5">2029</text>
<rect x="1136" y="791.56" width="140" height="163.94" fill="#4db3e6" />
<rect x="1136" y="751.88" width="140" height="39.68" fill="#4f52d2" />
<rect x="1136" y="683.78" width="140" height="68.1" fill="#f07b6f" />
<rect x="1136" y="634.54" width="140" height="49.24" fill="#f4b500" />
<text x="1206" y="1009" font-size="20.5" fill="#000" font-weight="bold" text-anchor="middle" textLength="50" lengthAdjust="spacingAndGlyphs" stroke="#000" stroke-width="0.5">2030</text>
<rect x="197.5" y="955" width="1119.8" height="2" fill="#6a9cbc" />
<text x="1823.9" y="497.6" font-size="36" fill="#000" font-weight="bold" textLength="165.6" lengthAdjust="spacingAndGlyphs" stroke="#000" stroke-width="0.7">REVENUE</text>
<text x="2002.3" y="497.6" font-size="36" fill="#000" font-weight="bold" textLength="234.4" lengthAdjust="spacingAndGlyphs" stroke="#000" stroke-width="0.7">BREAKDOWN</text>
<text x="2249.0" y="497.6" font-size="36" fill="#000" font-weight="bold" textLength="12.8" lengthAdjust="spacingAndGlyphs" stroke="#000" stroke-width="0.7">-</text>
<text x="2273.8" y="497.6" font-size="36" fill="#000" font-weight="bold" textLength="98.0" lengthAdjust="spacingAndGlyphs" stroke="#000" stroke-width="0.7">$'000</text>
<rect x="1472" y="527.8" width="9.8" height="9.2" fill="#4db3e6" />
<text x="1486" y="539.3" font-size="17.8" fill="#000" textLength="115" lengthAdjust="spacingAndGlyphs" >Artisan Cheese</text>
<rect x="1648" y="527.8" width="9.8" height="9.2" fill="#4f52d2" />
<text x="1661.8" y="539.3" font-size="17.8" fill="#000" textLength="194.8" lengthAdjust="spacingAndGlyphs" >Complementary Products</text>
<rect x="1903.2" y="527.8" width="9.8" height="9.2" fill="#f07b6f" />
<text x="1916.6" y="539.3" font-size="17.8" fill="#000" textLength="119.6" lengthAdjust="spacingAndGlyphs" >Curated Boards</text>
<rect x="2083.4" y="527.8" width="9.8" height="9.2" fill="#f4b500" />
<text x="2097" y="539.3" font-size="17.8" fill="#000" textLength="117.7" lengthAdjust="spacingAndGlyphs" >Tasting Classes</text>
<rect x="2262.6" y="527.8" width="9.8" height="9.2" fill="#2bb3a6" />
<text x="2275.6" y="539.3" font-size="17.8" fill="#000" textLength="7" lengthAdjust="spacingAndGlyphs" >-</text>
<rect x="2329.8" y="527.8" width="9.8" height="9.2" fill="#5e9c3c" />
<text x="2342.8" y="539.3" font-size="17.8" fill="#000" textLength="7" lengthAdjust="spacingAndGlyphs" >-</text>
<rect x="2396.5" y="527.8" width="9.8" height="9.2" fill="#8ea6d8" />
<text x="2409.5" y="539.3" font-size="17.8" fill="#000" textLength="7" lengthAdjust="spacingAndGlyphs" >-</text>
<rect x="2463.3" y="527.8" width="9.8" height="9.2" fill="#f2a58e" />
<text x="2476.3" y="539.3" font-size="17.8" fill="#000" textLength="7" lengthAdjust="spacingAndGlyphs" >-</text>
<rect x="2530" y="527.8" width="9.8" height="9.2" fill="#c4c4c4" />
<text x="2543" y="539.3" font-size="17.8" fill="#000" textLength="7" lengthAdjust="spacingAndGlyphs" >-</text>
<rect x="2597.2" y="527.8" width="9.8" height="9.2" fill="#fcd28c" />
<text x="2610.2" y="539.3" font-size="17.8" fill="#000" textLength="7" lengthAdjust="spacingAndGlyphs" >-</text>
<line x1="1516.3" y1="911.5" x2="2789" y2="911.5" stroke="#74a6bf" stroke-width="1" />
<line x1="1516.3" y1="868.5" x2="2789" y2="868.5" stroke="#74a6bf" stroke-width="1" />
<line x1="1516.3" y1="826.5" x2="2789" y2="826.5" stroke="#74a6bf" stroke-width="1" />
<line x1="1516.3" y1="783.5" x2="2789" y2="783.5" stroke="#74a6bf" stroke-width="1" />
<line x1="1516.3" y1="740.5" x2="2789" y2="740.5" stroke="#74a6bf" stroke-width="1" />
<line x1="1516.3" y1="698.5" x2="2789" y2="698.5" stroke="#74a6bf" stroke-width="1" />
<line x1="1516.3" y1="655.5" x2="2789" y2="655.5" stroke="#74a6bf" stroke-width="1" />
<line x1="1516.3" y1="613.5" x2="2789" y2="613.5" stroke="#74a6bf" stroke-width="1" />
<text x="1481" y="960.2" font-size="20" fill="#000" font-weight="bold" text-anchor="end" textLength="7.5" lengthAdjust="spacingAndGlyphs" >-</text>
<text x="1492" y="919.6" font-size="20" fill="#000" font-weight="bold" text-anchor="end" textLength="25.8" lengthAdjust="spacingAndGlyphs" stroke="#000" stroke-width="0.5">50</text>
<text x="1492" y="876.9" font-size="20" fill="#000" font-weight="bold" text-anchor="end" textLength="38.7" lengthAdjust="spacingAndGlyphs" stroke="#000" stroke-width="0.5">100</text>
<text x="1492" y="834.2" font-size="20" fill="#000" font-weight="bold" text-anchor="end" textLength="38.7" lengthAdjust="spacingAndGlyphs" stroke="#000" stroke-width="0.5">150</text>
<text x="1492" y="791.6" font-size="20" fill="#000" font-weight="bold" text-anchor="end" textLength="38.7" lengthAdjust="spacingAndGlyphs" stroke="#000" stroke-width="0.5">200</text>
<text x="1492" y="749.0" font-size="20" fill="#000" font-weight="bold" text-anchor="end" textLength="38.7" lengthAdjust="spacingAndGlyphs" stroke="#000" stroke-width="0.5">250</text>
<text x="1492" y="706.3" font-size="20" fill="#000" font-weight="bold" text-anchor="end" textLength="38.7" lengthAdjust="spacingAndGlyphs" stroke="#000" stroke-width="0.5">300</text>
<text x="1492" y="663.7" font-size="20" fill="#000" font-weight="bold" text-anchor="end" textLength="38.7" lengthAdjust="spacingAndGlyphs" stroke="#000" stroke-width="0.5">350</text>
<text x="1492" y="621.0" font-size="20" fill="#000" font-weight="bold" text-anchor="end" textLength="38.7" lengthAdjust="spacingAndGlyphs" stroke="#000" stroke-width="0.5">400</text>
<polygon points="1516.30,953.94 1537.88,952.92 1559.46,952.26 1581.04,951.60 1602.62,950.94 1624.20,950.28 1645.78,950.28 1667.36,950.28 1688.94,950.28 1710.52,950.28 1732.10,950.28 1753.68,950.28 1775.26,946.01 1796.84,945.81 1818.42,945.61 1840.00,945.41 1861.58,945.20 1883.16,945.00 1904.74,944.80 1926.32,944.60 1947.90,944.40 1969.48,944.20 1991.06,944.00 2012.64,943.79 2034.22,933.98 2055.80,933.17 2077.38,932.35 2098.96,931.54 2120.54,930.72 2142.12,929.91 2163.70,929.09 2185.28,928.28 2206.86,927.46 2228.44,926.65 2250.02,926.65 2271.60,926.65 2293.18,889.46 2314.76,886.81 2336.34,884.15 2357.92,881.50 2379.50,878.85 2401.08,876.20 2422.66,873.54 2444.24,870.89 2465.82,868.24 2487.40,865.59 2508.98,862.94 2530.56,860.28 2552.14,839.39 2573.72,832.05 2595.30,828.52 2616.88,824.99 2638.46,821.46 2660.04,817.92 2681.62,814.39 2703.20,810.86 2724.78,807.33 2746.36,803.80 2767.94,800.27 2789.52,796.74 2789.52,954.20 2767.94,954.20 2746.36,954.20 2724.78,954.20 2703.20,954.20 2681.62,954.20 2660.04,954.20 2638.46,954.20 2616.88,954.20 2595.30,954.20 2573.72,954.20 2552.14,954.20 2530.56,954.20 2508.98,954.20 2487.40,954.20 2465.82,954.20 2444.24,954.20 2422.66,954.20 2401.08,954.20 2379.50,954.20 2357.92,954.20 2336.34,954.20 2314.76,954.20 2293.18,954.20 2271.60,954.20 2250.02,954.20 2228.44,954.20 2206.86,954.20 2185.28,954.20 2163.70,954.20 2142.12,954.20 2120.54,954.20 2098.96,954.20 2077.38,954.20 2055.80,954.20 2034.22,954.20 2012.64,954.20 1991.06,954.20 1969.48,954.20 1947.90,954.20 1926.32,954.20 1904.74,954.20 1883.16,954.20 1861.58,954.20 1840.00,954.20 1818.42,954.20 1796.84,954.20 1775.26,954.20 1753.68,954.20 1732.10,954.20 1710.52,954.20 1688.94,954.20 1667.36,954.20 1645.78,954.20 1624.20,954.20 1602.62,954.20 1581.04,954.20 1559.46,954.20 1537.88,954.20 1516.30,954.20" fill="#4db3e6"/>
<polygon points="1516.30,953.90 1537.88,952.66 1559.46,951.85 1581.04,951.04 1602.62,950.23 1624.20,949.42 1645.78,949.42 1667.36,949.42 1688.94,949.42 1710.52,949.42 1732.10,949.42 1753.68,949.42 1775.26,944.48 1796.84,944.18 1818.42,943.89 1840.00,943.59 1861.58,943.30 1883.16,943.00 1904.74,942.71 1926.32,942.41 1947.90,942.12 1969.48,941.82 1991.06,941.53 2012.64,941.23 2034.22,930.74 2055.80,929.55 2077.38,928.35 2098.96,927.16 2120.54,925.97 2142.12,924.77 2163.70,923.58 2185.28,922.38 2206.86,921.19 2228.44,919.99 2250.02,919.99 2271.60,919.99 2293.18,873.85 2314.76,870.64 2336.34,867.43 2357.92,864.22 2379.50,861.01 2401.08,857.80 2422.66,854.59 2444.24,851.37 2465.82,848.16 2487.40,844.95 2508.98,841.74 2530.56,838.53 2552.14,811.66 2573.72,803.90 2595.30,799.49 2616.88,795.08 2638.46,790.67 2660.04,786.26 2681.62,781.85 2703.20,777.44 2724.78,773.03 2746.36,768.62 2767.94,764.21 2789.52,759.80 2789.52,796.74 2767.94,800.27 2746.36,803.80 2724.78,807.33 2703.20,810.86 2681.62,814.39 2660.04,817.92 2638.46,821.46 2616.88,824.99 2595.30,828.52 2573.72,832.05 2552.14,839.39 2530.56,860.28 2508.98,862.94 2487.40,865.59 2465.82,868.24 2444.24,870.89 2422.66,873.54 2401.08,876.20 2379.50,878.85 2357.92,881.50 2336.34,884.15 2314.76,886.81 2293.18,889.46 2271.60,926.65 2250.02,926.65 2228.44,926.65 2206.86,927.46 2185.28,928.28 2163.70,929.09 2142.12,929.91 2120.54,930.72 2098.96,931.54 2077.38,932.35 2055.80,933.17 2034.22,933.98 2012.64,943.79 1991.06,944.00 1969.48,944.20 1947.90,944.40 1926.32,944.60 1904.74,944.80 1883.16,945.00 1861.58,945.20 1840.00,945.41 1818.42,945.61 1796.84,945.81 1775.26,946.01 1753.68,950.28 1732.10,950.28 1710.52,950.28 1688.94,950.28 1667.36,950.28 1645.78,950.28 1624.20,950.28 1602.62,950.94 1581.04,951.60 1559.46,952.26 1537.88,952.92 1516.30,953.94" fill="#4f52d2"/>
<polygon points="1516.30,953.82 1537.88,952.24 1559.46,951.24 1581.04,950.23 1602.62,949.23 1624.20,948.23 1645.78,948.23 1667.36,948.23 1688.94,948.23 1710.52,948.23 1732.10,948.23 1753.68,948.23 1775.26,943.28 1796.84,942.97 1818.42,942.66 1840.00,942.35 1861.58,942.04 1883.16,941.73 1904.74,941.42 1926.32,941.11 1947.90,940.80 1969.48,940.49 1991.06,940.18 2012.64,939.87 2034.22,923.24 2055.80,921.62 2077.38,919.99 2098.96,918.37 2120.54,916.75 2142.12,915.13 2163.70,913.51 2185.28,911.89 2206.86,910.27 2228.44,908.65 2250.02,908.65 2271.60,908.65 2293.18,846.55 2314.76,842.35 2336.34,838.15 2357.92,833.94 2379.50,829.74 2401.08,825.54 2422.66,821.33 2444.24,817.13 2465.82,812.93 2487.40,808.72 2508.98,804.52 2530.56,800.32 2552.14,765.35 2573.72,753.75 2595.30,747.92 2616.88,742.09 2638.46,736.27 2660.04,730.44 2681.62,724.62 2703.20,718.79 2724.78,712.96 2746.36,707.14 2767.94,701.31 2789.52,695.49 2789.52,759.80 2767.94,764.21 2746.36,768.62 2724.78,773.03 2703.20,777.44 2681.62,781.85 2660.04,786.26 2638.46,790.67 2616.88,795.08 2595.30,799.49 2573.72,803.90 2552.14,811.66 2530.56,838.53 2508.98,841.74 2487.40,844.95 2465.82,848.16 2444.24,851.37 2422.66,854.59 2401.08,857.80 2379.50,861.01 2357.92,864.22 2336.34,867.43 2314.76,870.64 2293.18,873.85 2271.60,919.99 2250.02,919.99 2228.44,919.99 2206.86,921.19 2185.28,922.38 2163.70,923.58 2142.12,924.77 2120.54,925.97 2098.96,927.16 2077.38,928.35 2055.80,929.55 2034.22,930.74 2012.64,941.23 1991.06,941.53 1969.48,941.82 1947.90,942.12 1926.32,942.41 1904.74,942.71 1883.16,943.00 1861.58,943.30 1840.00,943.59 1818.42,943.89 1796.84,944.18 1775.26,944.48 1753.68,949.42 1732.10,949.42 1710.52,949.42 1688.94,949.42 1667.36,949.42 1645.78,949.42 1624.20,949.42 1602.62,950.23 1581.04,951.04 1559.46,951.85 1537.88,952.66 1516.30,953.90" fill="#f07b6f"/>
<polygon points="1516.30,953.77 1537.88,951.90 1559.46,950.77 1581.04,949.64 1602.62,948.51 1624.20,947.38 1645.78,947.38 1667.36,947.38 1688.94,947.38 1710.52,947.38 1732.10,947.38 1753.68,947.38 1775.26,942.09 1796.84,941.65 1818.42,941.22 1840.00,940.78 1861.58,940.35 1883.16,939.92 1904.74,939.48 1926.32,939.05 1947.90,938.61 1969.48,938.18 1991.06,937.74 2012.64,937.31 2034.22,918.37 2055.80,916.43 2077.38,914.49 2098.96,912.55 2120.54,910.60 2142.12,908.66 2163.70,906.72 2185.28,904.77 2206.86,902.83 2228.44,900.89 2250.02,900.89 2271.60,900.89 2293.18,828.47 2314.76,823.39 2336.34,818.31 2357.92,813.23 2379.50,808.15 2401.08,803.07 2422.66,797.99 2444.24,792.91 2465.82,787.83 2487.40,782.75 2508.98,777.68 2530.56,772.60 2552.14,729.69 2573.72,717.58 2595.30,710.59 2616.88,703.61 2638.46,696.62 2660.04,689.63 2681.62,682.65 2703.20,675.66 2724.78,668.68 2746.36,661.69 2767.94,654.70 2789.52,647.72 2789.52,695.49 2767.94,701.31 2746.36,707.14 2724.78,712.96 2703.20,718.79 2681.62,724.62 2660.04,730.44 2638.46,736.27 2616.88,742.09 2595.30,747.92 2573.72,753.75 2552.14,765.35 2530.56,800.32 2508.98,804.52 2487.40,808.72 2465.82,812.93 2444.24,817.13 2422.66,821.33 2401.08,825.54 2379.50,829.74 2357.92,833.94 2336.34,838.15 2314.76,842.35 2293.18,846.55 2271.60,908.65 2250.02,908.65 2228.44,908.65 2206.86,910.27 2185.28,911.89 2163.70,913.51 2142.12,915.13 2120.54,916.75 2098.96,918.37 2077.38,919.99 2055.80,921.62 2034.22,923.24 2012.64,939.87 1991.06,940.18 1969.48,940.49 1947.90,940.80 1926.32,941.11 1904.74,941.42 1883.16,941.73 1861.58,942.04 1840.00,942.35 1818.42,942.66 1796.84,942.97 1775.26,943.28 1753.68,948.23 1732.10,948.23 1710.52,948.23 1688.94,948.23 1667.36,948.23 1645.78,948.23 1624.20,948.23 1602.62,949.23 1581.04,950.23 1559.46,951.24 1537.88,952.24 1516.30,953.82" fill="#f4b500"/>
<rect x="1516.3" y="954.2" width="1272.7" height="1.3" fill="#5b9bc4" />
<text x="0" y="0" font-size="21" fill="#000" text-anchor="end" textLength="62.9" lengthAdjust="spacingAndGlyphs" transform="translate(1523.8,979.2) rotate(-45)">Jan-26</text>
<text x="0" y="0" font-size="21" fill="#000" text-anchor="end" textLength="65.2" lengthAdjust="spacingAndGlyphs" transform="translate(1567.0,979.2) rotate(-45)">Mar-26</text>
<text x="0" y="0" font-size="21" fill="#000" text-anchor="end" textLength="68.6" lengthAdjust="spacingAndGlyphs" transform="translate(1610.1,979.2) rotate(-45)">May-26</text>
<text x="0" y="0" font-size="21" fill="#000" text-anchor="end" textLength="56.1" lengthAdjust="spacingAndGlyphs" transform="translate(1653.3,979.2) rotate(-45)">Jul-26</text>
<text x="0" y="0" font-size="21" fill="#000" text-anchor="end" textLength="66.4" lengthAdjust="spacingAndGlyphs" transform="translate(1696.4,979.2) rotate(-45)">Sep-26</text>
<text x="0" y="0" font-size="21" fill="#000" text-anchor="end" textLength="66.3" lengthAdjust="spacingAndGlyphs" transform="translate(1739.6,979.2) rotate(-45)">Nov-26</text>
<text x="0" y="0" font-size="21" fill="#000" text-anchor="end" textLength="62.9" lengthAdjust="spacingAndGlyphs" transform="translate(1782.8,979.2) rotate(-45)">Jan-27</text>
<text x="0" y="0" font-size="21" fill="#000" text-anchor="end" textLength="65.2" lengthAdjust="spacingAndGlyphs" transform="translate(1825.9,979.2) rotate(-45)">Mar-27</text>
<text x="0" y="0" font-size="21" fill="#000" text-anchor="end" textLength="68.6" lengthAdjust="spacingAndGlyphs" transform="translate(1869.1,979.2) rotate(-45)">May-27</text>
<text x="0" y="0" font-size="21" fill="#000" text-anchor="end" textLength="56.1" lengthAdjust="spacingAndGlyphs" transform="translate(1912.2,979.2) rotate(-45)">Jul-27</text>
<text x="0" y="0" font-size="21" fill="#000" text-anchor="end" textLength="66.4" lengthAdjust="spacingAndGlyphs" transform="translate(1955.4,979.2) rotate(-45)">Sep-27</text>
<text x="0" y="0" font-size="21" fill="#000" text-anchor="end" textLength="66.3" lengthAdjust="spacingAndGlyphs" transform="translate(1998.6,979.2) rotate(-45)">Nov-27</text>
<text x="0" y="0" font-size="21" fill="#000" text-anchor="end" textLength="62.9" lengthAdjust="spacingAndGlyphs" transform="translate(2041.7,979.2) rotate(-45)">Jan-28</text>
<text x="0" y="0" font-size="21" fill="#000" text-anchor="end" textLength="65.2" lengthAdjust="spacingAndGlyphs" transform="translate(2084.9,979.2) rotate(-45)">Mar-28</text>
<text x="0" y="0" font-size="21" fill="#000" text-anchor="end" textLength="68.6" lengthAdjust="spacingAndGlyphs" transform="translate(2128.0,979.2) rotate(-45)">May-28</text>
<text x="0" y="0" font-size="21" fill="#000" text-anchor="end" textLength="56.1" lengthAdjust="spacingAndGlyphs" transform="translate(2171.2,979.2) rotate(-45)">Jul-28</text>
<text x="0" y="0" font-size="21" fill="#000" text-anchor="end" textLength="66.4" lengthAdjust="spacingAndGlyphs" transform="translate(2214.4,979.2) rotate(-45)">Sep-28</text>
<text x="0" y="0" font-size="21" fill="#000" text-anchor="end" textLength="66.3" lengthAdjust="spacingAndGlyphs" transform="translate(2257.5,979.2) rotate(-45)">Nov-28</text>
<text x="0" y="0" font-size="21" fill="#000" text-anchor="end" textLength="62.9" lengthAdjust="spacingAndGlyphs" transform="translate(2300.7,979.2) rotate(-45)">Jan-29</text>
<text x="0" y="0" font-size="21" fill="#000" text-anchor="end" textLength="65.2" lengthAdjust="spacingAndGlyphs" transform="translate(2343.8,979.2) rotate(-45)">Mar-29</text>
<text x="0" y="0" font-size="21" fill="#000" text-anchor="end" textLength="68.6" lengthAdjust="spacingAndGlyphs" transform="translate(2387.0,979.2) rotate(-45)">May-29</text>
<text x="0" y="0" font-size="21" fill="#000" text-anchor="end" textLength="56.1" lengthAdjust="spacingAndGlyphs" transform="translate(2430.2,979.2) rotate(-45)">Jul-29</text>
<text x="0" y="0" font-size="21" fill="#000" text-anchor="end" textLength="66.4" lengthAdjust="spacingAndGlyphs" transform="translate(2473.3,979.2) rotate(-45)">Sep-29</text>
<text x="0" y="0" font-size="21" fill="#000" text-anchor="end" textLength="66.3" lengthAdjust="spacingAndGlyphs" transform="translate(2516.5,979.2) rotate(-45)">Nov-29</text>
<text x="0" y="0" font-size="21" fill="#000" text-anchor="end" textLength="62.9" lengthAdjust="spacingAndGlyphs" transform="translate(2559.6,979.2) rotate(-45)">Jan-30</text>
<text x="0" y="0" font-size="21" fill="#000" text-anchor="end" textLength="65.2" lengthAdjust="spacingAndGlyphs" transform="translate(2602.8,979.2) rotate(-45)">Mar-30</text>
<text x="0" y="0" font-size="21" fill="#000" text-anchor="end" textLength="68.6" lengthAdjust="spacingAndGlyphs" transform="translate(2646.0,979.2) rotate(-45)">May-30</text>
<text x="0" y="0" font-size="21" fill="#000" text-anchor="end" textLength="56.1" lengthAdjust="spacingAndGlyphs" transform="translate(2689.1,979.2) rotate(-45)">Jul-30</text>
<text x="0" y="0" font-size="21" fill="#000" text-anchor="end" textLength="66.4" lengthAdjust="spacingAndGlyphs" transform="translate(2732.3,979.2) rotate(-45)">Sep-30</text>
<text x="0" y="0" font-size="21" fill="#000" text-anchor="end" textLength="66.3" lengthAdjust="spacingAndGlyphs" transform="translate(2775.4,979.2) rotate(-45)">Nov-30</text>
<text x="442.5" y="1099.7" font-size="36" fill="#000" font-weight="bold" textLength="95.6" lengthAdjust="spacingAndGlyphs" stroke="#000" stroke-width="0.7">CASH</text>
<text x="552" y="1099.7" font-size="36" fill="#000" font-weight="bold" textLength="166" lengthAdjust="spacingAndGlyphs" stroke="#000" stroke-width="0.7">BALANCE</text>
<text x="731" y="1099.7" font-size="36" fill="#000" font-weight="bold" textLength="13" lengthAdjust="spacingAndGlyphs" stroke="#000" stroke-width="0.7">-</text>
<text x="756.8" y="1099.7" font-size="36" fill="#000" font-weight="bold" textLength="99.8" lengthAdjust="spacingAndGlyphs" stroke="#000" stroke-width="0.7">$'000</text>
<line x1="178" y1="1505.5" x2="1306.3" y2="1505.5" stroke="#74a6bf" stroke-width="1" />
<line x1="178" y1="1453.5" x2="1306.3" y2="1453.5" stroke="#74a6bf" stroke-width="1" />
<line x1="178" y1="1402.5" x2="1306.3" y2="1402.5" stroke="#74a6bf" stroke-width="1" />
<line x1="178" y1="1351.5" x2="1306.3" y2="1351.5" stroke="#74a6bf" stroke-width="1" />
<line x1="178" y1="1299.5" x2="1306.3" y2="1299.5" stroke="#74a6bf" stroke-width="1" />
<line x1="178" y1="1248.5" x2="1306.3" y2="1248.5" stroke="#74a6bf" stroke-width="1" />
<line x1="178" y1="1196.5" x2="1306.3" y2="1196.5" stroke="#74a6bf" stroke-width="1" />
<line x1="178" y1="1145.5" x2="1306.3" y2="1145.5" stroke="#74a6bf" stroke-width="1" />
<text x="142.5" y="1562.7" font-size="20" fill="#000" font-weight="bold" text-anchor="end" textLength="7.5" lengthAdjust="spacingAndGlyphs" >-</text>
<text x="153.5" y="1513.3" font-size="20" fill="#000" font-weight="bold" text-anchor="end" textLength="37.7" lengthAdjust="spacingAndGlyphs" stroke="#000" stroke-width="0.5">500</text>
<text x="153.5" y="1461.9" font-size="20" fill="#000" font-weight="bold" text-anchor="end" textLength="56.6" lengthAdjust="spacingAndGlyphs" stroke="#000" stroke-width="0.5">1,000</text>
<text x="153.5" y="1410.5" font-size="20" fill="#000" font-weight="bold" text-anchor="end" textLength="56.6" lengthAdjust="spacingAndGlyphs" stroke="#000" stroke-width="0.5">1,500</text>
<text x="153.5" y="1359.1" font-size="20" fill="#000" font-weight="bold" text-anchor="end" textLength="56.6" lengthAdjust="spacingAndGlyphs" stroke="#000" stroke-width="0.5">2,000</text>
<text x="153.5" y="1307.7" font-size="20" fill="#000" font-weight="bold" text-anchor="end" textLength="56.6" lengthAdjust="spacingAndGlyphs" stroke="#000" stroke-width="0.5">2,500</text>
<text x="153.5" y="1256.3" font-size="20" fill="#000" font-weight="bold" text-anchor="end" textLength="56.6" lengthAdjust="spacingAndGlyphs" stroke="#000" stroke-width="0.5">3,000</text>
<text x="153.5" y="1204.9" font-size="20" fill="#000" font-weight="bold" text-anchor="end" textLength="56.6" lengthAdjust="spacingAndGlyphs" stroke="#000" stroke-width="0.5">3,500</text>
<text x="153.5" y="1153.5" font-size="20" fill="#000" font-weight="bold" text-anchor="end" textLength="56.6" lengthAdjust="spacingAndGlyphs" stroke="#000" stroke-width="0.5">4,000</text>
<rect x="220.5" y="1487.21" width="140.6" height="69.49" fill="#4db3e6" />
<text x="290.8" y="1610.2" font-size="20.5" fill="#000" font-weight="bold" text-anchor="middle" textLength="50" lengthAdjust="spacingAndGlyphs" stroke="#000" stroke-width="0.5">2026</text>
<rect x="446.16" y="1502.83" width="140.6" height="53.87" fill="#4db3e6" />
<text x="516.46" y="1610.2" font-size="20.5" fill="#000" font-weight="bold" text-anchor="middle" textLength="50" lengthAdjust="spacingAndGlyphs" stroke="#000" stroke-width="0.5">2027</text>
<rect x="671.82" y="1493.07" width="140.6" height="63.63" fill="#4db3e6" />
<text x="742.12" y="1610.2" font-size="20.5" fill="#000" font-weight="bold" text-anchor="middle" textLength="50" lengthAdjust="spacingAndGlyphs" stroke="#000" stroke-width="0.5">2028</text>
<rect x="897.48" y="1393.25" width="140.6" height="163.45" fill="#4db3e6" />
<text x="967.78" y="1610.2" font-size="20.5" fill="#000" font-weight="bold" text-anchor="middle" textLength="50" lengthAdjust="spacingAndGlyphs" stroke="#000" stroke-width="0.5">2029</text>
<rect x="1123.14" y="1189.81" width="140.6" height="366.89" fill="#4db3e6" />
<text x="1193.44" y="1610.2" font-size="20.5" fill="#000" font-weight="bold" text-anchor="middle" textLength="50" lengthAdjust="spacingAndGlyphs" stroke="#000" stroke-width="0.5">2030</text>
<line x1="177" y1="1557.2" x2="1307.3" y2="1557.2" stroke="#4472c4" stroke-width="2" />
<line x1="178.0" y1="1556.7" x2="178.0" y2="1564.7" stroke="#4472c4" stroke-width="2" />
<line x1="290.8" y1="1556.7" x2="290.8" y2="1562.7" stroke="#4472c4" stroke-width="1.6" />
<line x1="403.7" y1="1556.7" x2="403.7" y2="1564.7" stroke="#4472c4" stroke-width="2" />
<line x1="516.5" y1="1556.7" x2="516.5" y2="1562.7" stroke="#4472c4" stroke-width="1.6" />
<line x1="629.3" y1="1556.7" x2="629.3" y2="1564.7" stroke="#4472c4" stroke-width="2" />
<line x1="742.1" y1="1556.7" x2="742.1" y2="1562.7" stroke="#4472c4" stroke-width="1.6" />
<line x1="855.0" y1="1556.7" x2="855.0" y2="1564.7" stroke="#4472c4" stroke-width="2" />
<line x1="967.8" y1="1556.7" x2="967.8" y2="1562.7" stroke="#4472c4" stroke-width="1.6" />
<line x1="1080.6" y1="1556.7" x2="1080.6" y2="1564.7" stroke="#4472c4" stroke-width="2" />
<line x1="1193.5" y1="1556.7" x2="1193.5" y2="1562.7" stroke="#4472c4" stroke-width="1.6" />
<line x1="1306.3" y1="1556.7" x2="1306.3" y2="1564.7" stroke="#4472c4" stroke-width="2" />
<text x="1905.0" y="1095.5" font-size="36" fill="#000" font-weight="bold" textLength="95.6" lengthAdjust="spacingAndGlyphs" stroke="#000" stroke-width="0.7">CASH</text>
<text x="2014.5" y="1095.5" font-size="36" fill="#000" font-weight="bold" textLength="166" lengthAdjust="spacingAndGlyphs" stroke="#000" stroke-width="0.7">BALANCE</text>
<text x="2193.5" y="1095.5" font-size="36" fill="#000" font-weight="bold" textLength="13" lengthAdjust="spacingAndGlyphs" stroke="#000" stroke-width="0.7">-</text>
<text x="2219.3" y="1095.5" font-size="36" fill="#000" font-weight="bold" textLength="99.8" lengthAdjust="spacingAndGlyphs" stroke="#000" stroke-width="0.7">$'000</text>
<line x1="1528.4" y1="1504.5" x2="2789.6" y2="1504.5" stroke="#74a6bf" stroke-width="1" />
<line x1="1528.4" y1="1453.5" x2="2789.6" y2="1453.5" stroke="#74a6bf" stroke-width="1" />
<line x1="1528.4" y1="1402.5" x2="2789.6" y2="1402.5" stroke="#74a6bf" stroke-width="1" />
<line x1="1528.4" y1="1351.5" x2="2789.6" y2="1351.5" stroke="#74a6bf" stroke-width="1" />
<line x1="1528.4" y1="1300.5" x2="2789.6" y2="1300.5" stroke="#74a6bf" stroke-width="1" />
<line x1="1528.4" y1="1249.5" x2="2789.6" y2="1249.5" stroke="#74a6bf" stroke-width="1" />
<line x1="1528.4" y1="1199.5" x2="2789.6" y2="1199.5" stroke="#74a6bf" stroke-width="1" />
<line x1="1528.4" y1="1148.5" x2="2789.6" y2="1148.5" stroke="#74a6bf" stroke-width="1" />
<text x="1492.2" y="1561.3" font-size="20" fill="#000" font-weight="bold" text-anchor="end" textLength="7.5" lengthAdjust="spacingAndGlyphs" >-</text>
<text x="1503.2" y="1512.4" font-size="20" fill="#000" font-weight="bold" text-anchor="end" textLength="37.7" lengthAdjust="spacingAndGlyphs" stroke="#000" stroke-width="0.5">500</text>
<text x="1503.2" y="1461.5" font-size="20" fill="#000" font-weight="bold" text-anchor="end" textLength="56.6" lengthAdjust="spacingAndGlyphs" stroke="#000" stroke-width="0.5">1,000</text>
<text x="1503.2" y="1410.6" font-size="20" fill="#000" font-weight="bold" text-anchor="end" textLength="56.6" lengthAdjust="spacingAndGlyphs" stroke="#000" stroke-width="0.5">1,500</text>
<text x="1503.2" y="1359.7" font-size="20" fill="#000" font-weight="bold" text-anchor="end" textLength="56.6" lengthAdjust="spacingAndGlyphs" stroke="#000" stroke-width="0.5">2,000</text>
<text x="1503.2" y="1308.8" font-size="20" fill="#000" font-weight="bold" text-anchor="end" textLength="56.6" lengthAdjust="spacingAndGlyphs" stroke="#000" stroke-width="0.5">2,500</text>
<text x="1503.2" y="1257.9" font-size="20" fill="#000" font-weight="bold" text-anchor="end" textLength="56.6" lengthAdjust="spacingAndGlyphs" stroke="#000" stroke-width="0.5">3,000</text>
<text x="1503.2" y="1207.0" font-size="20" fill="#000" font-weight="bold" text-anchor="end" textLength="56.6" lengthAdjust="spacingAndGlyphs" stroke="#000" stroke-width="0.5">3,500</text>
<text x="1503.2" y="1156.1" font-size="20" fill="#000" font-weight="bold" text-anchor="end" textLength="56.6" lengthAdjust="spacingAndGlyphs" stroke="#000" stroke-width="0.5">4,000</text>
<polygon points="1528.20,1468.57 1549.58,1473.15 1570.96,1468.16 1592.34,1471.52 1613.72,1475.39 1635.10,1477.32 1656.48,1479.26 1677.86,1480.58 1699.24,1482.51 1720.62,1484.55 1742.00,1485.47 1763.38,1487.40 1784.76,1488.72 1806.14,1490.56 1827.52,1491.57 1848.90,1493.20 1870.28,1494.53 1891.66,1495.54 1913.04,1496.76 1934.42,1498.39 1955.80,1499.72 1977.18,1500.74 1998.56,1501.65 2019.94,1502.67 2041.32,1503.28 2062.70,1503.28 2084.08,1502.26 2105.46,1502.26 2126.84,1501.04 2148.22,1500.02 2169.60,1499.11 2190.98,1498.09 2212.36,1497.07 2233.74,1495.54 2255.12,1494.53 2276.50,1492.59 2297.88,1488.72 2319.26,1482.61 2340.64,1474.57 2362.02,1467.34 2383.40,1458.59 2404.78,1450.55 2426.16,1441.18 2447.54,1431.82 2468.92,1422.45 2490.30,1411.76 2511.68,1402.40 2533.06,1391.71 2554.44,1381.02 2575.82,1369.01 2597.20,1355.67 2618.58,1339.59 2639.96,1323.60 2661.34,1306.20 2682.72,1290.21 2704.10,1271.48 2725.48,1251.43 2746.86,1231.37 2768.24,1211.32 2789.62,1192.59 2789.62,1555.3 1528.20,1555.3" fill="#4db3e6"/>
<line x1="1527.4" y1="1555.8" x2="2790.6" y2="1555.8" stroke="#4472c4" stroke-width="2" />
<line x1="1528.2" y1="1555.3" x2="1528.2" y2="1562.3" stroke="#4472c4" stroke-width="1.8" />
<line x1="1549.6" y1="1555.3" x2="1549.6" y2="1560.3" stroke="#4472c4" stroke-width="1.8" />
<line x1="1571.0" y1="1555.3" x2="1571.0" y2="1560.3" stroke="#4472c4" stroke-width="1.8" />
<line x1="1592.3" y1="1555.3" x2="1592.3" y2="1562.3" stroke="#4472c4" stroke-width="1.8" />
<line x1="1613.7" y1="1555.3" x2="1613.7" y2="1560.3" stroke="#4472c4" stroke-width="1.8" />
<line x1="1635.1" y1="1555.3" x2="1635.1" y2="1560.3" stroke="#4472c4" stroke-width="1.8" />
<line x1="1656.5" y1="1555.3" x2="1656.5" y2="1562.3" stroke="#4472c4" stroke-width="1.8" />
<line x1="1677.9" y1="1555.3" x2="1677.9" y2="1560.3" stroke="#4472c4" stroke-width="1.8" />
<line x1="1699.2" y1="1555.3" x2="1699.2" y2="1560.3" stroke="#4472c4" stroke-width="1.8" />
<line x1="1720.6" y1="1555.3" x2="1720.6" y2="1562.3" stroke="#4472c4" stroke-width="1.8" />
<line x1="1742.0" y1="1555.3" x2="1742.0" y2="1560.3" stroke="#4472c4" stroke-width="1.8" />
<line x1="1763.4" y1="1555.3" x2="1763.4" y2="1560.3" stroke="#4472c4" stroke-width="1.8" />
<line x1="1784.8" y1="1555.3" x2="1784.8" y2="1562.3" stroke="#4472c4" stroke-width="1.8" />
<line x1="1806.1" y1="1555.3" x2="1806.1" y2="1560.3" stroke="#4472c4" stroke-width="1.8" />
<line x1="1827.5" y1="1555.3" x2="1827.5" y2="1560.3" stroke="#4472c4" stroke-width="1.8" />
<line x1="1848.9" y1="1555.3" x2="1848.9" y2="1562.3" stroke="#4472c4" stroke-width="1.8" />
<line x1="1870.3" y1="1555.3" x2="1870.3" y2="1560.3" stroke="#4472c4" stroke-width="1.8" />
<line x1="1891.7" y1="1555.3" x2="1891.7" y2="1560.3" stroke="#4472c4" stroke-width="1.8" />
<line x1="1913.0" y1="1555.3" x2="1913.0" y2="1562.3" stroke="#4472c4" stroke-width="1.8" />
<line x1="1934.4" y1="1555.3" x2="1934.4" y2="1560.3" stroke="#4472c4" stroke-width="1.8" />
<line x1="1955.8" y1="1555.3" x2="1955.8" y2="1560.3" stroke="#4472c4" stroke-width="1.8" />
<line x1="1977.2" y1="1555.3" x2="1977.2" y2="1562.3" stroke="#4472c4" stroke-width="1.8" />
<line x1="1998.6" y1="1555.3" x2="1998.6" y2="1560.3" stroke="#4472c4" stroke-width="1.8" />
<line x1="2019.9" y1="1555.3" x2="2019.9" y2="1560.3" stroke="#4472c4" stroke-width="1.8" />
<line x1="2041.3" y1="1555.3" x2="2041.3" y2="1562.3" stroke="#4472c4" stroke-width="1.8" />
<line x1="2062.7" y1="1555.3" x2="2062.7" y2="1560.3" stroke="#4472c4" stroke-width="1.8" />
<line x1="2084.1" y1="1555.3" x2="2084.1" y2="1560.3" stroke="#4472c4" stroke-width="1.8" />
<line x1="2105.5" y1="1555.3" x2="2105.5" y2="1562.3" stroke="#4472c4" stroke-width="1.8" />
<line x1="2126.8" y1="1555.3" x2="2126.8" y2="1560.3" stroke="#4472c4" stroke-width="1.8" />
<line x1="2148.2" y1="1555.3" x2="2148.2" y2="1560.3" stroke="#4472c4" stroke-width="1.8" />
<line x1="2169.6" y1="1555.3" x2="2169.6" y2="1562.3" stroke="#4472c4" stroke-width="1.8" />
<line x1="2191.0" y1="1555.3" x2="2191.0" y2="1560.3" stroke="#4472c4" stroke-width="1.8" />
<line x1="2212.4" y1="1555.3" x2="2212.4" y2="1560.3" stroke="#4472c4" stroke-width="1.8" />
<line x1="2233.7" y1="1555.3" x2="2233.7" y2="1562.3" stroke="#4472c4" stroke-width="1.8" />
<line x1="2255.1" y1="1555.3" x2="2255.1" y2="1560.3" stroke="#4472c4" stroke-width="1.8" />
<line x1="2276.5" y1="1555.3" x2="2276.5" y2="1560.3" stroke="#4472c4" stroke-width="1.8" />
<line x1="2297.9" y1="1555.3" x2="2297.9" y2="1562.3" stroke="#4472c4" stroke-width="1.8" />
<line x1="2319.3" y1="1555.3" x2="2319.3" y2="1560.3" stroke="#4472c4" stroke-width="1.8" />
<line x1="2340.6" y1="1555.3" x2="2340.6" y2="1560.3" stroke="#4472c4" stroke-width="1.8" />
<line x1="2362.0" y1="1555.3" x2="2362.0" y2="1562.3" stroke="#4472c4" stroke-width="1.8" />
<line x1="2383.4" y1="1555.3" x2="2383.4" y2="1560.3" stroke="#4472c4" stroke-width="1.8" />
<line x1="2404.8" y1="1555.3" x2="2404.8" y2="1560.3" stroke="#4472c4" stroke-width="1.8" />
<line x1="2426.2" y1="1555.3" x2="2426.2" y2="1562.3" stroke="#4472c4" stroke-width="1.8" />
<line x1="2447.5" y1="1555.3" x2="2447.5" y2="1560.3" stroke="#4472c4" stroke-width="1.8" />
<line x1="2468.9" y1="1555.3" x2="2468.9" y2="1560.3" stroke="#4472c4" stroke-width="1.8" />
<line x1="2490.3" y1="1555.3" x2="2490.3" y2="1562.3" stroke="#4472c4" stroke-width="1.8" />
<line x1="2511.7" y1="1555.3" x2="2511.7" y2="1560.3" stroke="#4472c4" stroke-width="1.8" />
<line x1="2533.1" y1="1555.3" x2="2533.1" y2="1560.3" stroke="#4472c4" stroke-width="1.8" />
<line x1="2554.4" y1="1555.3" x2="2554.4" y2="1562.3" stroke="#4472c4" stroke-width="1.8" />
<line x1="2575.8" y1="1555.3" x2="2575.8" y2="1560.3" stroke="#4472c4" stroke-width="1.8" />
<line x1="2597.2" y1="1555.3" x2="2597.2" y2="1560.3" stroke="#4472c4" stroke-width="1.8" />
<line x1="2618.6" y1="1555.3" x2="2618.6" y2="1562.3" stroke="#4472c4" stroke-width="1.8" />
<line x1="2640.0" y1="1555.3" x2="2640.0" y2="1560.3" stroke="#4472c4" stroke-width="1.8" />
<line x1="2661.3" y1="1555.3" x2="2661.3" y2="1560.3" stroke="#4472c4" stroke-width="1.8" />
<line x1="2682.7" y1="1555.3" x2="2682.7" y2="1562.3" stroke="#4472c4" stroke-width="1.8" />
<line x1="2704.1" y1="1555.3" x2="2704.1" y2="1560.3" stroke="#4472c4" stroke-width="1.8" />
<line x1="2725.5" y1="1555.3" x2="2725.5" y2="1560.3" stroke="#4472c4" stroke-width="1.8" />
<line x1="2746.9" y1="1555.3" x2="2746.9" y2="1562.3" stroke="#4472c4" stroke-width="1.8" />
<line x1="2768.2" y1="1555.3" x2="2768.2" y2="1560.3" stroke="#4472c4" stroke-width="1.8" />
<line x1="2789.6" y1="1555.3" x2="2789.6" y2="1560.3" stroke="#4472c4" stroke-width="1.8" />
<text x="0" y="0" font-size="21" fill="#000" text-anchor="end" textLength="62.9" lengthAdjust="spacingAndGlyphs" transform="translate(1535.2,1582.3) rotate(-45)">Jan-26</text>
<text x="0" y="0" font-size="21" fill="#000" text-anchor="end" textLength="61.8" lengthAdjust="spacingAndGlyphs" transform="translate(1599.3,1582.3) rotate(-45)">Apr-26</text>
<text x="0" y="0" font-size="21" fill="#000" text-anchor="end" textLength="56.1" lengthAdjust="spacingAndGlyphs" transform="translate(1663.5,1582.3) rotate(-45)">Jul-26</text>
<text x="0" y="0" font-size="21" fill="#000" text-anchor="end" textLength="61.8" lengthAdjust="spacingAndGlyphs" transform="translate(1727.6,1582.3) rotate(-45)">Oct-26</text>
<text x="0" y="0" font-size="21" fill="#000" text-anchor="end" textLength="62.9" lengthAdjust="spacingAndGlyphs" transform="translate(1791.8,1582.3) rotate(-45)">Jan-27</text>
<text x="0" y="0" font-size="21" fill="#000" text-anchor="end" textLength="61.8" lengthAdjust="spacingAndGlyphs" transform="translate(1855.9,1582.3) rotate(-45)">Apr-27</text>
<text x="0" y="0" font-size="21" fill="#000" text-anchor="end" textLength="56.1" lengthAdjust="spacingAndGlyphs" transform="translate(1920.0,1582.3) rotate(-45)">Jul-27</text>
<text x="0" y="0" font-size="21" fill="#000" text-anchor="end" textLength="61.8" lengthAdjust="spacingAndGlyphs" transform="translate(1984.2,1582.3) rotate(-45)">Oct-27</text>
<text x="0" y="0" font-size="21" fill="#000" text-anchor="end" textLength="62.9" lengthAdjust="spacingAndGlyphs" transform="translate(2048.3,1582.3) rotate(-45)">Jan-28</text>
<text x="0" y="0" font-size="21" fill="#000" text-anchor="end" textLength="61.8" lengthAdjust="spacingAndGlyphs" transform="translate(2112.5,1582.3) rotate(-45)">Apr-28</text>
<text x="0" y="0" font-size="21" fill="#000" text-anchor="end" textLength="56.1" lengthAdjust="spacingAndGlyphs" transform="translate(2176.6,1582.3) rotate(-45)">Jul-28</text>
<text x="0" y="0" font-size="21" fill="#000" text-anchor="end" textLength="61.8" lengthAdjust="spacingAndGlyphs" transform="translate(2240.7,1582.3) rotate(-45)">Oct-28</text>
<text x="0" y="0" font-size="21" fill="#000" text-anchor="end" textLength="62.9" lengthAdjust="spacingAndGlyphs" transform="translate(2304.9,1582.3) rotate(-45)">Jan-29</text>
<text x="0" y="0" font-size="21" fill="#000" text-anchor="end" textLength="61.8" lengthAdjust="spacingAndGlyphs" transform="translate(2369.0,1582.3) rotate(-45)">Apr-29</text>
<text x="0" y="0" font-size="21" fill="#000" text-anchor="end" textLength="56.1" lengthAdjust="spacingAndGlyphs" transform="translate(2433.2,1582.3) rotate(-45)">Jul-29</text>
<text x="0" y="0" font-size="21" fill="#000" text-anchor="end" textLength="61.8" lengthAdjust="spacingAndGlyphs" transform="translate(2497.3,1582.3) rotate(-45)">Oct-29</text>
<text x="0" y="0" font-size="21" fill="#000" text-anchor="end" textLength="62.9" lengthAdjust="spacingAndGlyphs" transform="translate(2561.4,1582.3) rotate(-45)">Jan-30</text>
<text x="0" y="0" font-size="21" fill="#000" text-anchor="end" textLength="61.8" lengthAdjust="spacingAndGlyphs" transform="translate(2625.6,1582.3) rotate(-45)">Apr-30</text>
<text x="0" y="0" font-size="21" fill="#000" text-anchor="end" textLength="56.1" lengthAdjust="spacingAndGlyphs" transform="translate(2689.7,1582.3) rotate(-45)">Jul-30</text>
<text x="0" y="0" font-size="21" fill="#000" text-anchor="end" textLength="61.8" lengthAdjust="spacingAndGlyphs" transform="translate(2753.9,1582.3) rotate(-45)">Oct-30</text>
<rect x="11" y="1670" width="2879" height="48" fill="#0c0c0c" />
<line x1="11" y1="1718.3" x2="2891" y2="1718.3" stroke="#363636" stroke-width="1" />
<rect x="11" y="1718.8" width="2880" height="32.2" fill="#141414" />
<path d="M53.5,1685 L47,1693 L53.5,1701" fill="none" stroke="#a8a8a8" stroke-width="1.6" />
<path d="M96.5,1685 L103,1693 L96.5,1701" fill="none" stroke="#a8a8a8" stroke-width="1.6" />
<text x="190.5" y="1703" font-size="20" fill="#fff" textLength="82.1" lengthAdjust="spacingAndGlyphs" >Contents</text>
<rect x="299.3" y="1676.3" width="127.39999999999998" height="35.6" fill="#fde96b" rx="6" />
<text x="363.0" y="1703" font-size="20" fill="#111" text-anchor="middle" textLength="98.8" lengthAdjust="spacingAndGlyphs" >Dashboard</text>
<rect x="440.6" y="1676.3" width="105.19999999999993" height="35.6" fill="#fde96b" rx="6" />
<text x="493.2" y="1703" font-size="20" fill="#111" text-anchor="middle" textLength="80.9" lengthAdjust="spacingAndGlyphs" >Revenue</text>
<rect x="559.1" y="1676.3" width="157.89999999999998" height="35.6" fill="#fde96b" rx="6" />
<text x="638.05" y="1703" font-size="20" fill="#111" text-anchor="middle" textLength="140.3" lengthAdjust="spacingAndGlyphs" >COGS &amp; OPEX</text>
<rect x="730.2" y="1676.3" width="88.29999999999995" height="35.6" fill="#fde96b" rx="6" />
<text x="774.35" y="1703" font-size="20" fill="#111" text-anchor="middle" textLength="61.7" lengthAdjust="spacingAndGlyphs" >Payroll</text>
<rect x="832.4" y="1676.3" width="86.30000000000007" height="35.6" fill="#fde96b" rx="6" />
<text x="875.55" y="1703" font-size="20" fill="#111" text-anchor="middle" textLength="68.5" lengthAdjust="spacingAndGlyphs" >CAPEX</text>
<rect x="932.6" y="1676.3" width="111.99999999999989" height="35.6" fill="#fde96b" rx="6" />
<text x="988.5999999999999" y="1703" font-size="20" fill="#111" text-anchor="middle" textLength="85.3" lengthAdjust="spacingAndGlyphs" >CapTable</text>
<rect x="1058.2" y="1676.3" width="89.20000000000005" height="35.6" fill="#fde96b" rx="6" />
<text x="1102.8000000000002" y="1703" font-size="20" fill="#111" text-anchor="middle" textLength="62.9" lengthAdjust="spacingAndGlyphs" >Capital</text>
<rect x="1161.3" y="1676.3" width="41.5" height="35.6" fill="#4db3e8" rx="6" />
<text x="1182.05" y="1703" font-size="20" fill="#111" text-anchor="middle" textLength="19.1" lengthAdjust="spacingAndGlyphs" >IS</text>
<rect x="1216" y="1676.3" width="47.59999999999991" height="35.6" fill="#4db3e8" rx="6" />
<text x="1239.8" y="1703" font-size="20" fill="#111" text-anchor="middle" textLength="26.9" lengthAdjust="spacingAndGlyphs" >CF</text>
<rect x="1277.5" y="1676.3" width="47.09999999999991" height="35.6" fill="#4db3e8" rx="6" />
<text x="1301.05" y="1703" font-size="20" fill="#111" text-anchor="middle" textLength="26.9" lengthAdjust="spacingAndGlyphs" >BS</text>
<rect x="1337.8" y="1676.3" width="115.0" height="35.6" fill="#4db3e8" rx="6" />
<text x="1395.3" y="1703" font-size="20" fill="#111" text-anchor="middle" textLength="89.8" lengthAdjust="spacingAndGlyphs" >Scenarios</text>
<rect x="1466" y="1676.3" width="115" height="35.6" fill="#4db3e8" rx="6" />
<text x="1523.5" y="1703" font-size="20" fill="#111" text-anchor="middle" textLength="82.7" lengthAdjust="spacingAndGlyphs" >Valuation</text>
<rect x="1594" y="1676.3" width="114" height="35.6" fill="#4db3e8" rx="6" />
<text x="1651.0" y="1703" font-size="20" fill="#111" text-anchor="middle" textLength="86.4" lengthAdjust="spacingAndGlyphs" >Summary</text>
<rect x="1720.6" y="1676.3" width="48.40000000000009" height="35.6" fill="#4db3e8" rx="6" />
<text x="1744.8" y="1703" font-size="20" fill="#111" text-anchor="middle" textLength="26.9" lengthAdjust="spacingAndGlyphs" >BE</text>
<rect x="1782" y="1676.3" width="72" height="35.6" fill="#4db3e8" rx="6" />
<text x="1818.0" y="1703" font-size="20" fill="#111" text-anchor="middle" textLength="50.5" lengthAdjust="spacingAndGlyphs" >ROIC</text>
<rect x="1965" y="1676.3" width="63.75" height="35.6" fill="#4db3e8" rx="6" />
<text x="1996.875" y="1703" font-size="20" fill="#111" text-anchor="middle" textLength="42.7" lengthAdjust="spacingAndGlyphs" >KPIs</text>
<rect x="2042" y="1676.3" width="40" height="35.6" fill="#4db3e8" rx="6" />
<rect x="2071.6" y="1672" width="14" height="42" fill="#0c0c0c" />
<text x="2047" y="1703" font-size="20" fill="#111" >Sc</text>
<rect x="2071.6" y="1672" width="14" height="42" fill="#0c0c0c" />
<line x1="292.4" y1="1681" x2="292.4" y2="1707" stroke="#4a4a4a" stroke-width="1.2" />
<line x1="433.5" y1="1681" x2="433.5" y2="1707" stroke="#4a4a4a" stroke-width="1.2" />
<line x1="552.9" y1="1681" x2="552.9" y2="1707" stroke="#4a4a4a" stroke-width="1.2" />
<line x1="723.9" y1="1681" x2="723.9" y2="1707" stroke="#4a4a4a" stroke-width="1.2" />
<line x1="826" y1="1681" x2="826" y2="1707" stroke="#4a4a4a" stroke-width="1.2" />
<line x1="925.8" y1="1681" x2="925.8" y2="1707" stroke="#4a4a4a" stroke-width="1.2" />
<line x1="1051.7" y1="1681" x2="1051.7" y2="1707" stroke="#4a4a4a" stroke-width="1.2" />
<line x1="1154.2" y1="1681" x2="1154.2" y2="1707" stroke="#4a4a4a" stroke-width="1.2" />
<line x1="1209.6" y1="1681" x2="1209.6" y2="1707" stroke="#4a4a4a" stroke-width="1.2" />
<line x1="1270.4" y1="1681" x2="1270.4" y2="1707" stroke="#4a4a4a" stroke-width="1.2" />
<line x1="1331.7" y1="1681" x2="1331.7" y2="1707" stroke="#4a4a4a" stroke-width="1.2" />
<line x1="1459.4" y1="1681" x2="1459.4" y2="1707" stroke="#4a4a4a" stroke-width="1.2" />
<line x1="1587.5" y1="1681" x2="1587.5" y2="1707" stroke="#4a4a4a" stroke-width="1.2" />
<line x1="1714.4" y1="1681" x2="1714.4" y2="1707" stroke="#4a4a4a" stroke-width="1.2" />
<line x1="1776" y1="1681" x2="1776" y2="1707" stroke="#4a4a4a" stroke-width="1.2" />
<line x1="1860" y1="1681" x2="1860" y2="1707" stroke="#4a4a4a" stroke-width="1.2" />
<line x1="1958" y1="1681" x2="1958" y2="1707" stroke="#4a4a4a" stroke-width="1.2" />
<line x1="2035" y1="1681" x2="2035" y2="1707" stroke="#4a4a4a" stroke-width="1.2" />
<defs><linearGradient id="atab" x1="0" y1="0" x2="0" y2="1"><stop offset="0" stop-color="#ffffff"/><stop offset="0.55" stop-color="#f4f9fd"/><stop offset="1" stop-color="#d6e9f7"/></linearGradient></defs>
<path d="M1863,1670 L1866.6,1674 L1866.6,1707 Q1866.6,1711.8 1871.4,1711.8 L1947,1711.8 Q1951.9,1711.8 1951.9,1707 L1951.9,1674 L1955.5,1670 Z" fill="url(#atab)" />
<text x="1879" y="1698" font-size="20" fill="#1a1a1a" textLength="60" lengthAdjust="spacingAndGlyphs" >Charts</text>
<rect x="1879" y="1705" width="60.5" height="2.6" fill="#217346" rx="1" />
<circle cx="2088.5" cy="1692.8" r="2" fill="#e8e8e8"/>
<circle cx="2095" cy="1692.8" r="2" fill="#e8e8e8"/>
<circle cx="2101.5" cy="1692.8" r="2" fill="#e8e8e8"/>
<line x1="2134.7" y1="1693" x2="2152" y2="1693" stroke="#e8e8e8" stroke-width="1.6" />
<line x1="2143.3" y1="1684.5" x2="2143.3" y2="1701.5" stroke="#e8e8e8" stroke-width="1.6" />
<circle cx="2191.8" cy="1686.5" r="1.8" fill="#e8e8e8"/>
<circle cx="2191.8" cy="1693" r="1.8" fill="#e8e8e8"/>
<circle cx="2191.8" cy="1699.5" r="1.8" fill="#e8e8e8"/>
<rect x="2216" y="1680.7" width="643" height="24.3" fill="#161616" rx="12" />
<path d="M2233,1687.5 L2224.5,1693 L2233,1698.5 Z" fill="#9a9a9a" />
<rect x="2242" y="1687" width="560" height="12" fill="#9a9a9a" rx="6" />
<path d="M2843,1687.5 L2851.5,1693 L2843,1698.5 Z" fill="#9a9a9a" />
<text x="27.3" y="1741.5" font-size="16.5" fill="#e8e8e8" textLength="42.3" lengthAdjust="spacingAndGlyphs" >Ready</text>
<rect x="100" y="1727.5" width="20" height="16" fill="none" stroke="#d8d8d8" stroke-width="1.3"/>
<line x1="100" y1="1731" x2="120" y2="1731" stroke="#d8d8d8" stroke-width="1.2" />
<line x1="103" y1="1735" x2="109" y2="1735" stroke="#d8d8d8" stroke-width="1.2" />
<line x1="103" y1="1739" x2="108" y2="1739" stroke="#d8d8d8" stroke-width="1.2" />
<circle cx="115.5" cy="1740" r="5" fill="#141414" stroke="#d8d8d8" stroke-width="1.3"/><circle cx="115.5" cy="1740" r="2.2" fill="#d8d8d8"/>
<circle cx="155" cy="1728.5" r="2.3" fill="none" stroke="#d8d8d8" stroke-width="1.3"/>
<path d="M146.5,1733 Q155,1736 164,1731 M155,1734.5 L153,1740 L148.5,1745 M153.5,1739.5 L158,1744" fill="none" stroke="#d8d8d8" stroke-width="1.3" />
<path d="M160,1739 L167,1746 M167,1739 L160,1746" fill="none" stroke="#d8d8d8" stroke-width="1.3" />
<text x="173.3" y="1741.5" font-size="16.5" fill="#ffffff" font-weight="bold" textLength="187.6" lengthAdjust="spacingAndGlyphs" >Accessibility: Investigate</text>
<rect x="2445" y="1719" width="59.7" height="31" fill="#262626" />
<rect x="2464.5" y="1726.5" width="5.3" height="5.3" fill="none" stroke="#e8e8e8" stroke-width="1.3"/>
<rect x="2464.5" y="1733.2" width="5.3" height="5.3" fill="none" stroke="#e8e8e8" stroke-width="1.3"/>
<rect x="2464.5" y="1739.9" width="5.3" height="5.3" fill="none" stroke="#e8e8e8" stroke-width="1.3"/>
<rect x="2471.2" y="1726.5" width="5.3" height="5.3" fill="none" stroke="#e8e8e8" stroke-width="1.3"/>
<rect x="2471.2" y="1733.2" width="5.3" height="5.3" fill="none" stroke="#e8e8e8" stroke-width="1.3"/>
<rect x="2471.2" y="1739.9" width="5.3" height="5.3" fill="none" stroke="#e8e8e8" stroke-width="1.3"/>
<rect x="2477.9" y="1726.5" width="5.3" height="5.3" fill="none" stroke="#e8e8e8" stroke-width="1.3"/>
<rect x="2477.9" y="1733.2" width="5.3" height="5.3" fill="none" stroke="#e8e8e8" stroke-width="1.3"/>
<rect x="2477.9" y="1739.9" width="5.3" height="5.3" fill="none" stroke="#e8e8e8" stroke-width="1.3"/>
<rect x="2524" y="1726.5" width="21" height="19.5" fill="none" stroke="#e0e0e0" stroke-width="1.5"/>
<rect x="2527.5" y="1730" width="14" height="12.5" fill="none" stroke="#e0e0e0" stroke-width="1.2"/>
<line x1="2530" y1="1733" x2="2539" y2="1733" stroke="#e0e0e0" stroke-width="1" />
<line x1="2530" y1="1736" x2="2539" y2="1736" stroke="#e0e0e0" stroke-width="1" />
<line x1="2530" y1="1739" x2="2539" y2="1739" stroke="#e0e0e0" stroke-width="1" />
<path d="M2584.5,1726.5 L2605.5,1726.5 L2605.5,1746 L2584.5,1746 Z M2590,1726.5 L2590,1737 L2598,1737 L2598,1726.5" fill="none" stroke="#e0e0e0" stroke-width="1.5" />
<line x1="2632.6" y1="1734.5" x2="2644.8" y2="1734.5" stroke="#d0d0d0" stroke-width="1.5" />
<line x1="2653.4" y1="1734.5" x2="2800.4" y2="1734.5" stroke="#9a9a9a" stroke-width="1.2" />
<rect x="2726" y="1726" width="8" height="17" fill="#bdbdbd" rx="1" />
<line x1="2808" y1="1734.5" x2="2820" y2="1734.5" stroke="#d0d0d0" stroke-width="1.5" />
<line x1="2814" y1="1728.5" x2="2814" y2="1740.5" stroke="#d0d0d0" stroke-width="1.5" />
<text x="2840" y="1742" font-size="17" fill="#e8e8e8" textLength="38" lengthAdjust="spacingAndGlyphs" >110%</text>
</svg></body></html>
